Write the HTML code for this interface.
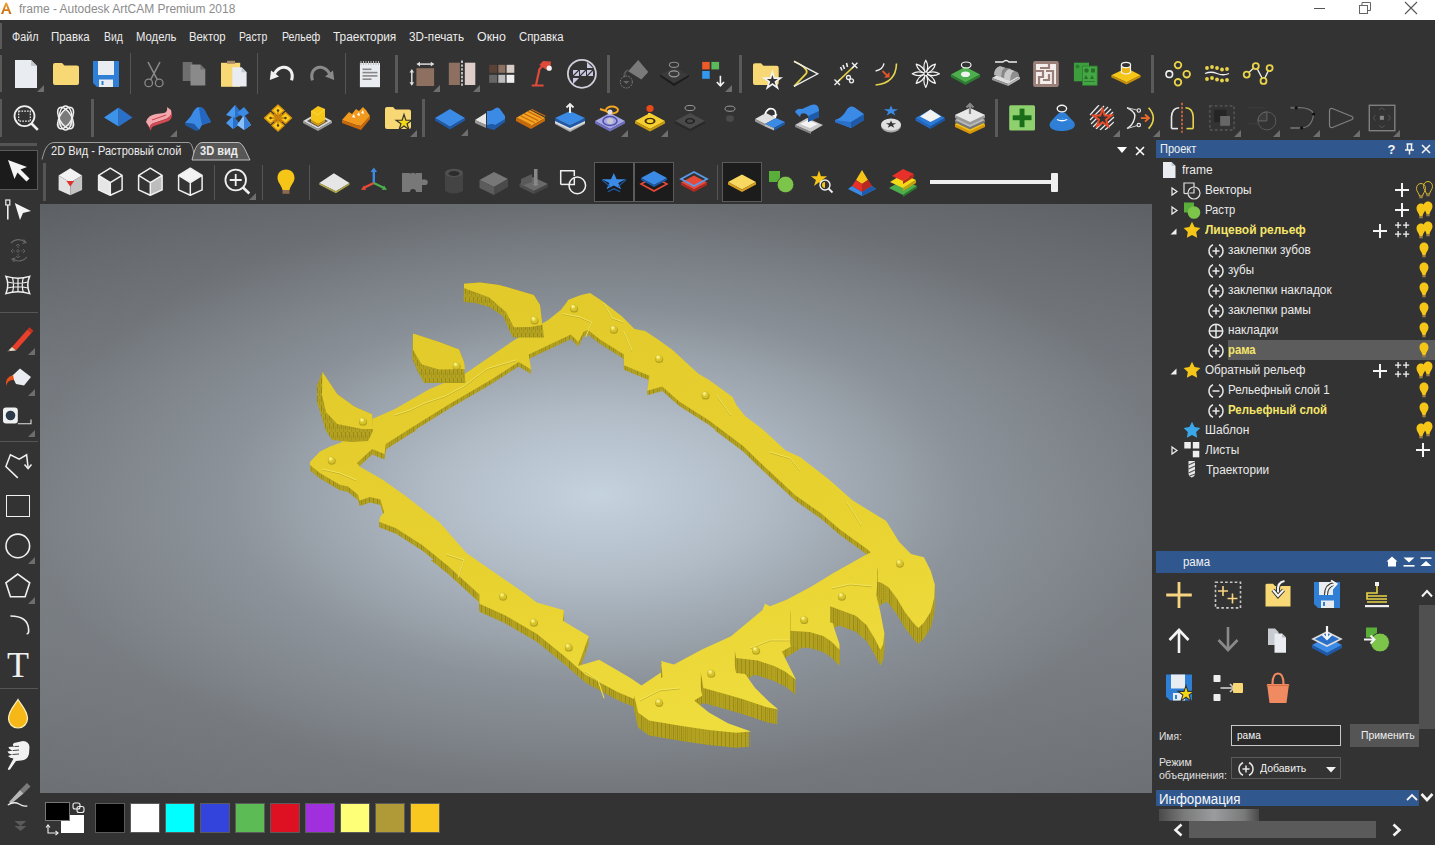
<!DOCTYPE html>
<html><head><meta charset="utf-8"><style>
html,body{margin:0;padding:0;width:1435px;height:845px;overflow:hidden;background:#333;}
body{position:relative;font-family:"Liberation Sans", sans-serif;}
svg{display:block}
</style></head><body>
<div style="position:absolute;left:0px;top:0px;width:1435px;height:20px;background:#ffffff"></div>
<svg style="position:absolute;left:0px;top:1px;overflow:visible" width="13" height="14" viewBox="0 0 13 14"><defs><linearGradient id="lg" x1="0" y1="0" x2="0" y2="1"><stop offset="0" stop-color="#f0a030"/><stop offset="1" stop-color="#c86a10"/></linearGradient></defs><path d="M1 13 L5.2 2.2 Q6.2 1 7.2 2.2 L11.5 13 H9.3 L8.2 10 H4.3 L3.2 13 Z M4.9 8.2 H7.6 L6.25 4.4 Z" fill="url(#lg)"/></svg>
<div style="position:absolute;left:19.2px;top:1.5px;font-size:12px;line-height:14px;color:#8c8c8c;font-weight:normal;white-space:nowrap;transform:scaleX(0.9981);transform-origin:0 0;">frame - Autodesk ArtCAM Premium 2018</div>
<div style="position:absolute;left:1314px;top:8px;width:11px;height:1px;background:#555"></div>
<svg style="position:absolute;left:1359px;top:2px;overflow:visible" width="12" height="12" viewBox="0 0 12 12"><rect x="0.5" y="3.5" width="8" height="8" fill="none" stroke="#666"/><path d="M3 3.5 V0.5 H11.5 V8.5 H8.5" fill="none" stroke="#666"/></svg>
<svg style="position:absolute;left:1404px;top:1px;overflow:visible" width="14" height="14" viewBox="0 0 14 14"><path d="M1 1 L13 13 M13 1 L1 13" stroke="#555" stroke-width="1.1"/></svg>
<div style="position:absolute;left:0px;top:20px;width:1435px;height:825px;background:#333333"></div>
<div style="position:absolute;left:11.5px;top:29.5px;font-size:12px;line-height:14px;color:#ececec;font-weight:normal;white-space:nowrap;transform:scaleX(0.8983);transform-origin:0 0;">Файл</div>
<div style="position:absolute;left:51.2px;top:29.5px;font-size:12px;line-height:14px;color:#ececec;font-weight:normal;white-space:nowrap;transform:scaleX(0.9548);transform-origin:0 0;">Правка</div>
<div style="position:absolute;left:103.5px;top:29.5px;font-size:12px;line-height:14px;color:#ececec;font-weight:normal;white-space:nowrap;transform:scaleX(0.8662);transform-origin:0 0;">Вид</div>
<div style="position:absolute;left:135.5px;top:29.5px;font-size:12px;line-height:14px;color:#ececec;font-weight:normal;white-space:nowrap;transform:scaleX(0.9402);transform-origin:0 0;">Модель</div>
<div style="position:absolute;left:189.2px;top:29.5px;font-size:12px;line-height:14px;color:#ececec;font-weight:normal;white-space:nowrap;transform:scaleX(0.9441);transform-origin:0 0;">Вектор</div>
<div style="position:absolute;left:239.4px;top:29.5px;font-size:12px;line-height:14px;color:#ececec;font-weight:normal;white-space:nowrap;transform:scaleX(0.8689);transform-origin:0 0;">Растр</div>
<div style="position:absolute;left:281.5px;top:29.5px;font-size:12px;line-height:14px;color:#ececec;font-weight:normal;white-space:nowrap;transform:scaleX(0.8795);transform-origin:0 0;">Рельеф</div>
<div style="position:absolute;left:332.7px;top:29.5px;font-size:12px;line-height:14px;color:#ececec;font-weight:normal;white-space:nowrap;transform:scaleX(0.9895);transform-origin:0 0;">Траектория</div>
<div style="position:absolute;left:409px;top:29.5px;font-size:12px;line-height:14px;color:#ececec;font-weight:normal;white-space:nowrap;transform:scaleX(0.9729);transform-origin:0 0;">3D-печать</div>
<div style="position:absolute;left:477px;top:29.5px;font-size:12px;line-height:14px;color:#ececec;font-weight:normal;white-space:nowrap;transform:scaleX(1.0332);transform-origin:0 0;">Окно</div>
<div style="position:absolute;left:519.2px;top:29.5px;font-size:12px;line-height:14px;color:#ececec;font-weight:normal;white-space:nowrap;transform:scaleX(0.9452);transform-origin:0 0;">Справка</div>
<div style="position:absolute;left:0px;top:23px;width:2px;height:26px;background:#5a5a5a"></div>
<div style="position:absolute;left:0px;top:55px;width:2px;height:37px;background:#5a5a5a"></div>
<div style="position:absolute;left:0px;top:99px;width:2px;height:38px;background:#5a5a5a"></div>
<div style="position:absolute;left:40px;top:204px;width:1112px;height:589px;background:radial-gradient(ellipse 820px 420px at 558px 291px, rgba(197,211,223,1) 0%, rgba(180,191,202,0.95) 20%, rgba(150,158,166,0.7) 45%, rgba(129,135,141,0.36) 70%, rgba(120,124,129,0) 100%), linear-gradient(to bottom, #5b5e62 0%, #6e7277 30%, #767a7f 55%, #74787d 75%, #6c6f73 100%)"></div>
<svg style="position:absolute;left:40px;top:140px;overflow:visible" width="215" height="22" viewBox="0 0 215 22"><path d="M2 19.5 C4 12 6 3 14 2.5 L148 2.5 C152 2.5 153 8 155 19.5" fill="none" stroke="#a8a8a8" stroke-width="0.9"/><path d="M152 20 C154 12 156 3 162 2.5 L198 2.5 C203 2.5 206 12 210 20 Z" fill="#575757" stroke="#c8c8c8" stroke-width="0.9"/></svg>
<div style="position:absolute;left:51px;top:144px;font-size:12px;line-height:14px;color:#ececec;font-weight:normal;white-space:nowrap;transform:scaleX(0.9200);transform-origin:0 0;">2D Вид - Растровый слой</div>
<div style="position:absolute;left:200px;top:144px;font-size:12px;line-height:14px;color:#ececec;font-weight:bold;white-space:nowrap;transform:scaleX(0.9200);transform-origin:0 0;">3D вид</div>
<div style="position:absolute;left:43px;top:163px;width:3px;height:38px;background:#555"></div>
<svg style="position:absolute;left:1117px;top:147px;overflow:visible" width="10" height="7" viewBox="0 0 10 7"><path d="M0 0 H10 L5 6 Z" fill="#fff"/></svg>
<svg style="position:absolute;left:1135px;top:146px;overflow:visible" width="10" height="10" viewBox="0 0 10 10"><path d="M1 1 L9 9 M9 1 L1 9" stroke="#fff" stroke-width="1.6"/></svg>
<div style="position:absolute;left:0px;top:143px;width:37px;height:3px;background:#555"></div>
<div style="position:absolute;left:0px;top:150px;width:38px;height:40px;background:#1b1b1b;border:1px solid #5a5a5a;box-sizing:border-box;border-left:none"></div>
<div style="position:absolute;left:1156px;top:140px;width:279px;height:18px;background:#30588f"></div>
<div style="position:absolute;left:1160px;top:142px;font-size:12px;line-height:14px;color:#f0f0f0;font-weight:normal;white-space:nowrap;transform:scaleX(0.9200);transform-origin:0 0;">Проект</div>
<svg style="position:absolute;left:10.0px;top:57.0px;overflow:visible" width="32" height="32" viewBox="0 0 32 32"><path d="M5 3 H21 L27 9 V31 H5 Z" fill="#e9ecf0"/><path d="M21 3 V9 H27 Z" fill="#c2c8d0"/></svg>
<svg style="position:absolute;left:37px;top:85px;overflow:visible" width="7" height="7" viewBox="0 0 7 7"><path d="M7 0 L7 7 L0 7 Z" fill="#6e6e6e"/></svg>
<svg style="position:absolute;left:50.0px;top:57.0px;overflow:visible" width="32" height="32" viewBox="0 0 32 32"><path d="M3 8 Q3 6 5 6 H12 L14.5 8.5 H27 Q29 8.5 29 10.5 V26 Q29 28 27 28 H5 Q3 28 3 26 Z" fill="#f8d775"/></svg>
<svg style="position:absolute;left:90.0px;top:57.0px;overflow:visible" width="32" height="32" viewBox="0 0 32 32"><path d="M3 4 H29 V30 H7 L3 26 Z" fill="#2f7fd6"/><rect x="8" y="4" width="16" height="14" fill="#e9ecf0"/><rect x="9" y="22.5" width="14" height="7.5" fill="#e9ecf0"/><rect x="11.5" y="24" width="2" height="4" fill="#2f7fd6"/></svg>
<div style="position:absolute;left:130px;top:53px;width:1px;height:41px;background:#555"></div>
<svg style="position:absolute;left:138.0px;top:57.0px;overflow:visible" width="32" height="32" viewBox="0 0 32 32"><path d="M10 5 L19.5 23 M22 5 L12.5 23" stroke="#8a8a8a" stroke-width="1.6"/><circle cx="10.7" cy="25.9" r="3.8" fill="none" stroke="#8a8a8a" stroke-width="1.3"/><circle cx="21.2" cy="25.9" r="3.8" fill="none" stroke="#8a8a8a" stroke-width="1.3"/></svg>
<svg style="position:absolute;left:178.0px;top:57.0px;overflow:visible" width="32" height="32" viewBox="0 0 32 32"><rect x="4.7" y="5" width="9.6" height="19" fill="#6e6e6e"/><path d="M12.5 7.6 H22.3 L27.3 12.6 V28.5 H12.5 Z" fill="#8a8a8a"/><path d="M22.3 7.6 V12.6 H27.3 Z" fill="#6e6e6e"/></svg>
<svg style="position:absolute;left:218.0px;top:57.0px;overflow:visible" width="32" height="32" viewBox="0 0 32 32"><rect x="3" y="5.8" width="19.2" height="24" fill="#f8d775"/><rect x="9" y="3.8" width="8" height="3" fill="#a88a6a"/><path d="M14.3 10.2 H23.6 L28.6 15.2 V29.4 H14.3 Z" fill="#e9ecf0"/><path d="M23.6 10.2 V15.2 H28.6 Z" fill="#c2c8d0"/></svg>
<div style="position:absolute;left:257px;top:53px;width:1px;height:41px;background:#555"></div>
<svg style="position:absolute;left:266.0px;top:57.0px;overflow:visible" width="32" height="32" viewBox="0 0 32 32"><path d="M25.6 23.3 C28 15 23 9.5 17 10.2 C13.5 10.6 10.5 13 8.5 16.5" fill="none" stroke="#f2f2f2" stroke-width="3"/><path d="M3.8 23 L5 13.5 L13 19.5 Z" fill="#f2f2f2"/></svg>
<svg style="position:absolute;left:306.0px;top:57.0px;overflow:visible" width="32" height="32" viewBox="0 0 32 32"><path d="M6.4 23.3 C4 15 9 9.5 15 10.2 C18.5 10.6 21.5 13 23.5 16.5" fill="none" stroke="#8a8a8a" stroke-width="3"/><path d="M28.2 23 L27 13.5 L19 19.5 Z" fill="#8a8a8a"/></svg>
<div style="position:absolute;left:345px;top:53px;width:1px;height:41px;background:#555"></div>
<svg style="position:absolute;left:354.0px;top:57.0px;overflow:visible" width="32" height="32" viewBox="0 0 32 32"><rect x="5.9" y="6" width="20.1" height="24.2" fill="#e9ecf0"/><path d="M7 4 V8 M9.5 4 V8 M12 4 V8 M14.5 4 V8 M17 4 V8 M19.5 4 V8 M22 4 V8 M24.5 4 V8" stroke="#bbb" stroke-width="1"/><rect x="8.5" y="11.5" width="9" height="1.6" fill="#888"/><rect x="8.5" y="14.8" width="15" height="1.6" fill="#888"/><rect x="8.5" y="18.1" width="15" height="1.6" fill="#888"/><rect x="8.5" y="21.4" width="9" height="1.6" fill="#888"/></svg>
<div style="position:absolute;left:395px;top:55px;width:3px;height:38px;background:#5a5a5a"></div>
<svg style="position:absolute;left:406.0px;top:57.0px;overflow:visible" width="32" height="32" viewBox="0 0 32 32"><rect x="10.4" y="11.2" width="17.7" height="17.8" fill="#8e7060"/><path d="M11.5 7.1 H27.3" stroke="#ddd" stroke-width="1.5"/><path d="M10.5 7.1 L14 4.8 V9.4 Z M28.3 7.1 L24.8 4.8 V9.4 Z" fill="#ddd"/><path d="M5.8 13 V27.7" stroke="#ddd" stroke-width="1.5"/><path d="M5.8 12 L3.5 15.5 H8.1 Z M5.8 28.7 L3.5 25.2 H8.1 Z" fill="#ddd"/></svg>
<svg style="position:absolute;left:433px;top:85px;overflow:visible" width="7" height="7" viewBox="0 0 7 7"><path d="M7 0 L7 7 L0 7 Z" fill="#6e6e6e"/></svg>
<svg style="position:absolute;left:446.0px;top:57.0px;overflow:visible" width="32" height="32" viewBox="0 0 32 32"><rect x="2.8" y="5.7" width="11.1" height="22.3" fill="#8e7060"/><path d="M16 3.6 V30" stroke="#e0e0e0" stroke-width="1.6" stroke-dasharray="2.4 1.4"/><rect x="18.8" y="5.7" width="10.5" height="22.3" fill="#dccdc9"/></svg>
<svg style="position:absolute;left:473px;top:85px;overflow:visible" width="7" height="7" viewBox="0 0 7 7"><path d="M7 0 L7 7 L0 7 Z" fill="#6e6e6e"/></svg>
<svg style="position:absolute;left:485.0px;top:57.0px;overflow:visible" width="32" height="32" viewBox="0 0 32 32"><rect x="4.2" y="7.8" width="7.9" height="8" fill="#5a4238"/><rect x="13.3" y="7.8" width="7" height="8" fill="#8e7060"/><rect x="21.6" y="7.8" width="7.7" height="8" fill="#d8ccc8"/><rect x="4.2" y="17.8" width="7.9" height="8" fill="#666"/><rect x="13.3" y="17.8" width="7" height="8" fill="#bdbdbd"/><rect x="21.6" y="17.8" width="7.7" height="8" fill="#f0f0f0"/></svg>
<svg style="position:absolute;left:526.0px;top:57.0px;overflow:visible" width="32" height="32" viewBox="0 0 32 32"><path d="M5.7 28.5 H17.6" stroke="#e04a3a" stroke-width="2"/><path d="M10 28 L13.5 12 L18 7.5" fill="none" stroke="#e04a3a" stroke-width="2.2"/><path d="M13.4 8 L17 4 L25 4.5 L24.2 12 L20 12.5 Z" fill="#e04a3a"/><circle cx="23.2" cy="11.2" r="2.6" fill="#f4f4f4"/></svg>
<svg style="position:absolute;left:566.0px;top:57.0px;overflow:visible" width="32" height="32" viewBox="0 0 32 32"><circle cx="15.9" cy="16.8" r="14" fill="none" stroke="#d0d0dc" stroke-width="1.8"/><path d="M7 13 H13 V19 H7 Z M14 13 H20 V19 H14 Z M21 13 H27 V19 H21 Z" fill="#c8c8e2"/><path d="M7 19 L13 13 M14 19 L20 13 M21 19 L27 13" stroke="#333" stroke-width="1.2"/><path d="M21 5 L27 11 H21 Z M7 21 H13 L7 27 Z" fill="#c8c8e2"/></svg>
<div style="position:absolute;left:607px;top:55px;width:3px;height:38px;background:#5a5a5a"></div>
<svg style="position:absolute;left:618.0px;top:57.0px;overflow:visible" width="32" height="32" viewBox="0 0 32 32"><path d="M10.2 14.3 L20.2 3 L30.3 14.9 L23.4 22.5 Z" fill="#7a7a7a"/><path d="M10 13 Q5 16 7 20" fill="none" stroke="#555" stroke-width="2"/><circle cx="8.3" cy="25" r="6" fill="none" stroke="#888" stroke-width="1" stroke-dasharray="1.5 1.2"/><path d="M5 24 H11.6 L8.3 27 Z" fill="#666"/></svg>
<svg style="position:absolute;left:658.0px;top:57.0px;overflow:visible" width="32" height="32" viewBox="0 0 32 32"><path d="M2.2 17.4 L16 9.9 L31 18 L16 26.5 Z" fill="#3a3a3a"/><path d="M2.2 17.4 L16 26.5 L31 18 L31 19.8 L16 28.9 L2.2 19.4 Z" fill="#1c1c1c"/><ellipse cx="16" cy="16.8" rx="5" ry="3" fill="none" stroke="#9a9a9a" stroke-width="1.2"/><ellipse cx="16" cy="7.8" rx="4.6" ry="2.6" fill="none" stroke="#8a8a8a" stroke-width="1.1"/></svg>
<svg style="position:absolute;left:698.0px;top:57.0px;overflow:visible" width="32" height="32" viewBox="0 0 32 32"><rect x="4.2" y="4.9" width="7.5" height="7.5" fill="#f05a28"/><rect x="13.4" y="4.9" width="7.7" height="7.5" fill="#5cb85c"/><rect x="4.2" y="14" width="7.5" height="7.8" fill="#3399ee"/><path d="M22.4 18.7 V28.5 M18.8 25 L22.4 28.8 L26 25" fill="none" stroke="#f4f4f4" stroke-width="1.6"/></svg>
<svg style="position:absolute;left:725px;top:85px;overflow:visible" width="7" height="7" viewBox="0 0 7 7"><path d="M7 0 L7 7 L0 7 Z" fill="#6e6e6e"/></svg>
<div style="position:absolute;left:739px;top:55px;width:3px;height:38px;background:#5a5a5a"></div>
<svg style="position:absolute;left:750.0px;top:57.0px;overflow:visible" width="32" height="32" viewBox="0 0 32 32"><path d="M3 8 Q3 6.2 5 6.2 H11 L13.5 8.7 H26.7 Q28.7 8.7 28.7 10.7 V26 Q28.7 28.1 26.7 28.1 H5 Q3 28.1 3 26 Z" fill="#f8d775"/><path transform="translate(22.4 23.8) scale(8.5)" d="M0 -1 L0.2245 -0.309 L0.951 -0.309 L0.363 0.118 L0.588 0.809 L0 0.382 L-0.588 0.809 L-0.363 0.118 L-0.951 -0.309 L-0.2245 -0.309 Z" fill="#333" stroke="#f2f2f2" stroke-width="0.2"/></svg>
<svg style="position:absolute;left:789.0px;top:57.0px;overflow:visible" width="32" height="32" viewBox="0 0 32 32"><path d="M5 4.3 Q21 12 16.9 16.8 Q12 22 5 29.4" fill="none" stroke="#e8d44a" stroke-width="1.8"/><path d="M5 4.3 L28.8 16.8 L5 29.4" fill="none" stroke="#eee" stroke-width="1.3"/></svg>
<svg style="position:absolute;left:829.0px;top:57.0px;overflow:visible" width="32" height="32" viewBox="0 0 32 32"><path d="M8.3 25.2 L25.7 8.5" stroke="#e8d44a" stroke-width="1.6"/><path d="M5.5 22.5 L11 28 M11 22.5 L5.5 28 M23 5.8 L28.4 11.2 M28.4 5.8 L23 11.2" stroke="#f0f0f0" stroke-width="1.4"/><path d="M14 8 L15.5 12 M17.5 6 L18.5 10 M11.5 10 L13 13.5" stroke="#f0f0f0" stroke-width="1.6"/><circle cx="19.5" cy="20.5" r="2" fill="none" stroke="#f0f0f0" stroke-width="1.3"/><circle cx="22.5" cy="23.8" r="2" fill="none" stroke="#f0f0f0" stroke-width="1.3"/></svg>
<svg style="position:absolute;left:869.0px;top:57.0px;overflow:visible" width="32" height="32" viewBox="0 0 32 32"><path d="M27.5 6.4 Q27 26 6.6 28" fill="none" stroke="#e8d44a" stroke-width="1.6"/><path d="M15 6.4 Q14 12.5 6.6 14" fill="none" stroke="#eee" stroke-width="1.4"/><path d="M13.6 14 L19.3 19.8" stroke="#e8542a" stroke-width="1.8"/><path d="M15 20.5 H20.5 V15 Z" fill="#e8542a"/></svg>
<svg style="position:absolute;left:910.0px;top:57.0px;overflow:visible" width="32" height="32" viewBox="0 0 32 32"><path d="M15.8 16.8 Q19.6 9.5 15.8 3.2 Q12 9.5 15.8 16.8 Z" transform="rotate(0 15.8 16.8)" fill="none" stroke="#f4f4f4" stroke-width="1.2" stroke-linejoin="round"/><path d="M15.8 16.8 Q19.6 9.5 15.8 3.2 Q12 9.5 15.8 16.8 Z" transform="rotate(45 15.8 16.8)" fill="none" stroke="#f4f4f4" stroke-width="1.2" stroke-linejoin="round"/><path d="M15.8 16.8 Q19.6 9.5 15.8 3.2 Q12 9.5 15.8 16.8 Z" transform="rotate(90 15.8 16.8)" fill="none" stroke="#f4f4f4" stroke-width="1.2" stroke-linejoin="round"/><path d="M15.8 16.8 Q19.6 9.5 15.8 3.2 Q12 9.5 15.8 16.8 Z" transform="rotate(135 15.8 16.8)" fill="none" stroke="#f4f4f4" stroke-width="1.2" stroke-linejoin="round"/><path d="M15.8 16.8 Q19.6 9.5 15.8 3.2 Q12 9.5 15.8 16.8 Z" transform="rotate(180 15.8 16.8)" fill="none" stroke="#f4f4f4" stroke-width="1.2" stroke-linejoin="round"/><path d="M15.8 16.8 Q19.6 9.5 15.8 3.2 Q12 9.5 15.8 16.8 Z" transform="rotate(225 15.8 16.8)" fill="none" stroke="#f4f4f4" stroke-width="1.2" stroke-linejoin="round"/><path d="M15.8 16.8 Q19.6 9.5 15.8 3.2 Q12 9.5 15.8 16.8 Z" transform="rotate(270 15.8 16.8)" fill="none" stroke="#f4f4f4" stroke-width="1.2" stroke-linejoin="round"/><path d="M15.8 16.8 Q19.6 9.5 15.8 3.2 Q12 9.5 15.8 16.8 Z" transform="rotate(315 15.8 16.8)" fill="none" stroke="#f4f4f4" stroke-width="1.2" stroke-linejoin="round"/><circle cx="15.8" cy="16.8" r="1.3" fill="#222"/></svg>
<svg style="position:absolute;left:950.0px;top:57.0px;overflow:visible" width="32" height="32" viewBox="0 0 32 32"><path d="M0.9 17.5 L15.5 9.8 L30.1 17.5 L15.5 25.5 Z" fill="#4cae4c"/><path d="M0.9 17.5 L15.5 25.5 L30.1 17.5 V20 L15.5 28 L0.9 20 Z" fill="#2e7d32"/><ellipse cx="15.5" cy="17.3" rx="4.5" ry="2.8" fill="#eef3ee"/><ellipse cx="16.2" cy="8" rx="4.8" ry="3" fill="none" stroke="#f2f2f2" stroke-width="1.2"/></svg>
<svg style="position:absolute;left:990.0px;top:57.0px;overflow:visible" width="32" height="32" viewBox="0 0 32 32"><path d="M5 5 H13 Q16 2 19 5 H27" fill="none" stroke="#eee" stroke-width="1.3"/><path d="M2 21 L14 14 L30 20 L18 27 Z" fill="#ddd"/><path d="M2 21 L18 27 V29 L2 23 Z" fill="#999"/><path d="M18 27 L30 20 V22 L18 29 Z" fill="#bbb"/><path d="M4 18 Q4 11 10 9 L16 11 Q11 13 11 20 Z" fill="#b5b5b5"/><path d="M11 20 Q11 13 16 11 Q22 11 22 14 L18 23 Z" fill="#888"/><path d="M14 22 Q14 14 19 12 L25 14 Q20 16 20 24 Z" fill="#c8c8c8"/><path d="M20 24 Q20 16 25 14 Q29 15 29 19 Z" fill="#8f8f8f"/></svg>
<svg style="position:absolute;left:1030.0px;top:57.0px;overflow:visible" width="32" height="32" viewBox="0 0 32 32"><rect x="3.1" y="4" width="25.7" height="26" rx="2" fill="#9a8078"/><rect x="6" y="7" width="20" height="20" fill="#f4eeec"/><path d="M6 14 H13 V20 H9 V27 M19 7 V11 H10 M16 14 H23 V27 M13 23 H19 V17" fill="none" stroke="#9a8078" stroke-width="2.2"/></svg>
<svg style="position:absolute;left:1069.0px;top:57.0px;overflow:visible" width="32" height="32" viewBox="0 0 32 32"><rect x="4.9" y="5.7" width="15.1" height="18.6" fill="#3d9e3d"/><rect x="13.6" y="9.1" width="14.6" height="19.2" fill="#43a843" stroke="#2f7d2f" stroke-width="0.8"/><circle cx="8.5" cy="9.5" r="2" fill="#2e7a2e"/><circle cx="17.5" cy="13.5" r="2.2" fill="#2a6e2a"/><rect x="22" y="11.5" width="4" height="4" fill="#2a6e2a"/><path d="M15 22 L17 18 L19 22 Z M21 22 L23 18 L25 22 Z" fill="#2a6e2a"/><path d="M15 24.5 H26" stroke="#2a6e2a" stroke-width="0.8"/></svg>
<svg style="position:absolute;left:1110.0px;top:57.0px;overflow:visible" width="32" height="32" viewBox="0 0 32 32"><path d="M1.3 18.2 L16.5 11.1 L30.6 18.2 L16.5 25.3 Z" fill="#f5c518"/><path d="M1.3 18.2 L16.5 25.3 L30.6 18.2 V20.3 L16.5 27.5 L1.3 20.3 Z" fill="#c9920c"/><path d="M11.4 8 V15.5 Q16 18.5 20.5 15.5 V8" fill="#e9b616" stroke="#f4f4f4" stroke-width="1.1"/><ellipse cx="16" cy="8" rx="4.6" ry="2.6" fill="#333" stroke="#f4f4f4" stroke-width="1.2"/></svg>
<div style="position:absolute;left:1151px;top:55px;width:3px;height:38px;background:#5a5a5a"></div>
<svg style="position:absolute;left:1162.0px;top:57.0px;overflow:visible" width="32" height="32" viewBox="0 0 32 32"><circle cx="7.3" cy="17.2" r="3.3" fill="none" stroke="#f0f0f0" stroke-width="1.6"/><circle cx="16" cy="8.1" r="3.3" fill="none" stroke="#e8d44a" stroke-width="1.8"/><circle cx="24.7" cy="17.2" r="3.3" fill="none" stroke="#e8d44a" stroke-width="1.8"/><circle cx="16" cy="25.3" r="3.3" fill="none" stroke="#e8d44a" stroke-width="1.8"/></svg>
<svg style="position:absolute;left:1202.0px;top:57.0px;overflow:visible" width="32" height="32" viewBox="0 0 32 32"><circle cx="5" cy="11" r="1.9" fill="#e8d44a"/><circle cx="10" cy="10" r="1.9" fill="#e8d44a"/><circle cx="15" cy="11" r="1.9" fill="#e8d44a"/><circle cx="20" cy="12.5" r="1.9" fill="#e8d44a"/><circle cx="25" cy="12" r="1.9" fill="#e8d44a"/><circle cx="5" cy="22" r="1.9" fill="#e8d44a"/><circle cx="10" cy="21" r="1.9" fill="#e8d44a"/><circle cx="15" cy="22.5" r="1.9" fill="#e8d44a"/><circle cx="20" cy="23.5" r="1.9" fill="#e8d44a"/><circle cx="25" cy="23" r="1.9" fill="#e8d44a"/><path d="M3 16.5 Q9 14 15 16.5 T27 16.5" fill="none" stroke="#f0f0f0" stroke-width="1.3"/></svg>
<svg style="position:absolute;left:1242.0px;top:57.0px;overflow:visible" width="32" height="32" viewBox="0 0 32 32"><path d="M4.7 17.6 L13.8 9.1 L21.5 23.9 L27.6 11.1" fill="none" stroke="#f0f0f0" stroke-width="1.3"/><circle cx="4.7" cy="17.6" r="3" fill="#333" stroke="#e8d44a" stroke-width="1.8"/><circle cx="13.8" cy="9.1" r="3" fill="#333" stroke="#e8d44a" stroke-width="1.8"/><circle cx="21.5" cy="23.9" r="3" fill="#333" stroke="#e8d44a" stroke-width="1.8"/><circle cx="27.6" cy="11.1" r="3" fill="#333" stroke="#e8d44a" stroke-width="1.8"/></svg>
<svg style="position:absolute;left:9.0px;top:101.0px;overflow:visible" width="32" height="32" viewBox="0 0 32 32"><circle cx="15.5" cy="15.1" r="10" fill="none" stroke="#f0f0f0" stroke-width="1.8"/><rect x="9.7" y="10.2" width="11.6" height="10" fill="none" stroke="#f0f0f0" stroke-width="1.2" stroke-dasharray="1.6 1.2"/><path d="M22.5 22.5 L28.8 28.8" stroke="#f0f0f0" stroke-width="2.6"/></svg>
<svg style="position:absolute;left:50.0px;top:101.0px;overflow:visible" width="32" height="32" viewBox="0 0 32 32"><path d="M15.6 9 L23 24 H8 Z" fill="#7a7a7a" stroke="#7a7a7a" stroke-width="3" stroke-linejoin="round"/><ellipse cx="15.6" cy="17" rx="6.5" ry="12" fill="none" stroke="#f0f0f0" stroke-width="1.5"/><ellipse cx="15.6" cy="17" rx="12" ry="6" transform="rotate(60 15.6 17)" fill="none" stroke="#f0f0f0" stroke-width="1.5"/><ellipse cx="15.6" cy="17" rx="12" ry="6" transform="rotate(-60 15.6 17)" fill="none" stroke="#f0f0f0" stroke-width="1.5"/></svg>
<div style="position:absolute;left:91px;top:99px;width:3px;height:38px;background:#5a5a5a"></div>
<svg style="position:absolute;left:102.0px;top:101.0px;overflow:visible" width="32" height="32" viewBox="0 0 32 32"><path d="M2 16.5 L16.6 6.5 L16.6 25.6 Z" fill="#3d92ea"/><path d="M16.6 6.5 L30.5 16.5 L16.6 25.6 Z" fill="#2a6fc8"/></svg>
<svg style="position:absolute;left:142.0px;top:101.0px;overflow:visible" width="32" height="32" viewBox="0 0 32 32"><path d="M4 21 Q6 14 14 13 L22 12 Q26 11 25 6 L29 9 Q31 15 24 18 L12 22 Q8 23 8 27 Z" fill="#f3a7ad"/><path d="M4 21 L8 27 Q8 23 12 22 L24 18 Q31 15 29 9 L30 12 Q31 19 24 21 L12 25 Q9 26 9 30 Z" fill="#d24a52"/><path d="M10 19 L24 14" stroke="#c84048" stroke-width="1"/></svg>
<svg style="position:absolute;left:169.5px;top:129.5px;overflow:visible" width="7" height="7" viewBox="0 0 7 7"><path d="M7 0 L7 7 L0 7 Z" fill="#6e6e6e"/></svg>
<svg style="position:absolute;left:182.0px;top:101.0px;overflow:visible" width="32" height="32" viewBox="0 0 32 32"><path d="M3 22 L9 15 Q13 6 17 6 Q22 6 24 12 L29 21 L20 24 L17 29 L12 23 Z" fill="#3a8ae6"/><path d="M17 6 Q22 6 24 12 L29 21 L20 24 L18 14 Z" fill="#2466c0"/><path d="M3 22 L12 23 L17 29 L14 30 L3 24 Z" fill="#1f5aa8"/></svg>
<svg style="position:absolute;left:222.0px;top:101.0px;overflow:visible" width="32" height="32" viewBox="0 0 32 32"><path d="M4 14 L13 4 L20 13 L13 17 Z" fill="#4a9af0"/><path d="M13 4 L20 13 L13 17 Z" fill="#2a70c8"/><path d="M4 22 L11 15 L18 23 L11 28 Z" fill="#4a9af0"/><path d="M11 15 L18 23 L11 28 Z" fill="#2a70c8"/><path d="M15 24 L22 14 L29 24 L22 29 Z" fill="#8ac0f8"/><path d="M22 14 L29 24 L22 29 Z" fill="#3a80d8"/><path d="M15 12 L22 6 L27 12 L21 16 Z" fill="#3a8ae6"/></svg>
<svg style="position:absolute;left:262.0px;top:101.0px;overflow:visible" width="32" height="32" viewBox="0 0 32 32"><g stroke-linejoin="round"><path d="M16 4.0 L22 9.5 L16 15.0 L10 9.5 Z M23.5 11.5 L29.5 17 L23.5 22.5 L17.5 17 Z M16 19.0 L22 24.5 L16 30.0 L10 24.5 Z M8.5 11.5 L14.5 17 L8.5 22.5 L2.5 17 Z" fill="#f8cc20" stroke="#d8900c" stroke-width="1.4"/><path d="M16 9.5 L16 24.5 M8.5 17 L23.5 17 M12 13 L20 21 M20 13 L12 21" stroke="#c8800a" stroke-width="1.3"/></g><g fill="#5a3a00"><circle cx="16" cy="9.5" r="1.2"/><circle cx="23.5" cy="17" r="1.2"/><circle cx="16" cy="24.5" r="1.2"/><circle cx="8.5" cy="17" r="1.2"/></g></svg>
<svg style="position:absolute;left:301.0px;top:101.0px;overflow:visible" width="32" height="32" viewBox="0 0 32 32"><path d="M2 20 L16 12 L31 20 L17 28 Z" fill="#d8d8d8"/><path d="M2 20 L17 28 L31 20 V22 L17 30 L2 22 Z" fill="#9a9a9a"/><path d="M6 20 L16 14 L27 20 L17 26 Z" fill="#555"/><path d="M10 10 L17 5 L24 8 L24 19 L17 23 L10 19 Z" fill="#f5c518"/><path d="M10 19 L17 23 L24 19 V21 L17 25 L10 21 Z" fill="#d8980c"/><path d="M10 10 L17 14 L24 8" fill="none" stroke="#ffe066" stroke-width="0.6"/></svg>
<svg style="position:absolute;left:340.0px;top:101.0px;overflow:visible" width="32" height="32" viewBox="0 0 32 32"><path d="M2 19 L9 11 L12 13 L16 8 L19 10 L23 6 L26 9 L30 15 L21 25 L16 24 Z" fill="#f29a1e"/><path d="M2 19 L16 24 L21 25 L30 15 V18 L21 29 L2 22 Z" fill="#c86a0c"/><path d="M12 16 L14 13 L15 17 Z M17 14 L19 11 L20 15 Z M21 12 L23 9 L24 13 Z" fill="#fff"/></svg>
<svg style="position:absolute;left:383.0px;top:101.0px;overflow:visible" width="32" height="32" viewBox="0 0 32 32"><path d="M2 8 Q2 6 4 6 H10 L12.5 8.5 H26 Q28 8.5 28 10.5 V26 Q28 28 26 28 H4 Q2 28 2 26 Z" fill="#f8d775"/><path transform="translate(21 21.8) scale(8.3)" d="M0 -1 L0.2245 -0.309 L0.951 -0.309 L0.363 0.118 L0.588 0.809 L0 0.382 L-0.588 0.809 L-0.363 0.118 L-0.951 -0.309 L-0.2245 -0.309 Z" fill="#f5d815" stroke="#333" stroke-width="0.14"/></svg>
<svg style="position:absolute;left:409.5px;top:129.5px;overflow:visible" width="7" height="7" viewBox="0 0 7 7"><path d="M7 0 L7 7 L0 7 Z" fill="#6e6e6e"/></svg>
<div style="position:absolute;left:422px;top:99px;width:3px;height:38px;background:#5a5a5a"></div>
<svg style="position:absolute;left:433.5px;top:101.0px;overflow:visible" width="32" height="32" viewBox="0 0 32 32"><path d="M1 16.9 L16 7.9 L31 16.9 L16 25.8 Z" fill="#3a8ae6"/><path d="M1 16.9 L16 25.8 L31 16.9 V19.5 L16 28.4 L1 19.5 Z" fill="#1f5aa8"/></svg>
<svg style="position:absolute;left:460.5px;top:129px;overflow:visible" width="7" height="7" viewBox="0 0 7 7"><path d="M7 0 L7 7 L0 7 Z" fill="#6e6e6e"/></svg>
<svg style="position:absolute;left:473.7px;top:101.0px;overflow:visible" width="32" height="32" viewBox="0 0 32 32"><path d="M1 19 L12 12 V24 Z" fill="#e8e8e8"/><path d="M1 19 L12 24 V27 L1 22 Z" fill="#999"/><path d="M13 10 Q18 10 20 8 Q24 5 26 8 L31 15 L31 20 L20 27 L13 25 Z" fill="#3a8ae6"/><path d="M13 24 Q19 22 21 24 L31 18 V21 L20 29 L13 27 Z" fill="#1f5aa8"/></svg>
<svg style="position:absolute;left:514.0px;top:101.0px;overflow:visible" width="32" height="32" viewBox="0 0 32 32"><path d="M2 17 L16 9 L31 17 L17 25 Z" fill="#f5a623"/><path d="M2 17 L17 25 L31 17 V20 L17 28 L2 20 Z" fill="#c86a0c"/><path d="M3.0 17.0 L17.0 24.0" stroke="#c86a0c" stroke-width="1.2"/><path d="M6.6 14.8 L20.6 21.8" stroke="#c86a0c" stroke-width="1.2"/><path d="M10.2 12.6 L24.2 19.6" stroke="#c86a0c" stroke-width="1.2"/><path d="M13.8 10.399999999999999 L27.8 17.4" stroke="#c86a0c" stroke-width="1.2"/><path d="M17.4 8.2 L31.4 15.2" stroke="#c86a0c" stroke-width="1.2"/></svg>
<svg style="position:absolute;left:554.0px;top:101.0px;overflow:visible" width="32" height="32" viewBox="0 0 32 32"><path d="M1 20 L16 13 L31 20 V23 L16 31 L1 23 Z" fill="#aaa"/><path d="M1 20 L16 27 L31 20 V22 L16 29 L1 22 Z" fill="#ddd"/><path d="M1 17 L16 10 L31 17 L16 24 Z" fill="#3a8ae6"/><path d="M1 17 L16 24 L31 17 V20 L16 27 L1 20 Z" fill="#1f5aa8"/><path d="M16 3 V12" stroke="#eee" stroke-width="2"/><path d="M12.5 6.5 L16 3 L19.5 6.5" fill="none" stroke="#eee" stroke-width="1.8"/></svg>
<svg style="position:absolute;left:593.6px;top:101.0px;overflow:visible" width="32" height="32" viewBox="0 0 32 32"><path d="M1 20 L16 12 L31 20 L16 28 Z" fill="#a8a8e8"/><path d="M1 20 L16 28 L31 20 V22.5 L16 30.5 L1 22.5 Z" fill="#7070c0"/><ellipse cx="16" cy="20" rx="7" ry="4.5" fill="none" stroke="#5050a8" stroke-width="1.6"/><circle cx="16" cy="20" r="3" fill="#c8c8d0"/><ellipse cx="18" cy="9" rx="6" ry="3.5" fill="none" stroke="#f5a623" stroke-width="2"/><path d="M6 8 L12 10" stroke="#f5a623" stroke-width="2"/><circle cx="16" cy="11" r="2.5" fill="#ddd"/></svg>
<svg style="position:absolute;left:620.6px;top:129.5px;overflow:visible" width="7" height="7" viewBox="0 0 7 7"><path d="M7 0 L7 7 L0 7 Z" fill="#6e6e6e"/></svg>
<svg style="position:absolute;left:633.6px;top:101.0px;overflow:visible" width="32" height="32" viewBox="0 0 32 32"><path d="M1 20 L16 12 L31 20 L16 28 Z" fill="#f5d030"/><path d="M1 20 L16 28 L31 20 V22.5 L16 30.5 L1 22.5 Z" fill="#c89a10"/><ellipse cx="16" cy="20" rx="5.5" ry="3.2" fill="#3a2a00"/><ellipse cx="16" cy="20" rx="3.5" ry="2" fill="#f5d030"/><path d="M15 12 V17" stroke="#f5d030" stroke-width="2"/><circle cx="16" cy="7.5" r="3.6" fill="#e84a1a"/></svg>
<svg style="position:absolute;left:660.6px;top:129.5px;overflow:visible" width="7" height="7" viewBox="0 0 7 7"><path d="M7 0 L7 7 L0 7 Z" fill="#6e6e6e"/></svg>
<svg style="position:absolute;left:674.0px;top:101.0px;overflow:visible" width="32" height="32" viewBox="0 0 32 32"><path d="M1 20 L16 12 L31 20 L16 28 Z" fill="#4a4a4a"/><path d="M1 20 L16 28 L31 20 V22.5 L16 30.5 L1 22.5 Z" fill="#2a2a2a"/><ellipse cx="16" cy="20" rx="5" ry="3" fill="#222"/><ellipse cx="16" cy="20" rx="3" ry="1.7" fill="#4a4a4a"/><ellipse cx="16" cy="7" rx="5" ry="2.6" fill="none" stroke="#999" stroke-width="1"/></svg>
<svg style="position:absolute;left:713.6px;top:101.0px;overflow:visible" width="32" height="32" viewBox="0 0 32 32"><ellipse cx="16" cy="7.7" rx="5" ry="2.6" fill="none" stroke="#9a9a9a" stroke-width="1"/><ellipse cx="16" cy="17.6" rx="4" ry="3.3" fill="#4a4a4a"/></svg>
<svg style="position:absolute;left:753.7px;top:101.0px;overflow:visible" width="32" height="32" viewBox="0 0 32 32"><path d="M1 18 L12 12 L22 17 L11 23 Z" fill="#e0e0e0"/><path d="M11 23 L22 17 L31 21 L20 27 Z" fill="#3a8ae6"/><path d="M1 18 L11 23 V25.5 L1 20.5 Z" fill="#999"/><path d="M11 23 L20 27 V29.5 L11 25.5 Z" fill="#bbb"/><path d="M20 27 L31 21 V23.5 L20 29.5 Z" fill="#1f5aa8"/><path d="M11 13 Q14 6 19 8 Q23 10 21 16" fill="none" stroke="#fff" stroke-width="1.6"/><path d="M18 14.5 L21.5 17.5 L23.5 13 Z" fill="#fff"/></svg>
<svg style="position:absolute;left:794.0px;top:101.0px;overflow:visible" width="32" height="32" viewBox="0 0 32 32"><path d="M1 24 L13 17 L29 24 L17 31 Z" fill="#c8c8c8"/><path d="M6 23 L14 19 L24 23 L16 27 Z" fill="#f4f4f4"/><path d="M1 24 L17 31 V33 L1 26 Z" fill="#888"/><path d="M1 11 Q3 7 8 8 L17 4 Q24 2 25 9 L25 16 L14 21 L14 15 Q12 11 7 13 L6 16 Z" fill="#3a8ae6"/><path d="M14 15 L25 10 V16 L14 21 Z" fill="#1f5aa8"/></svg>
<svg style="position:absolute;left:834.0px;top:101.0px;overflow:visible" width="32" height="32" viewBox="0 0 32 32"><path d="M1 19 Q8 17 12 10 Q15 4 20 6 L30 13 L30 19 L17 27 L1 21 Z" fill="#3a8ae6"/><path d="M17 21 L30 13 V19 L17 27 Z" fill="#1f5aa8"/><path d="M1 19 L17 21 V27 L1 21 Z" fill="#2a70c8"/></svg>
<svg style="position:absolute;left:874.6px;top:101.0px;overflow:visible" width="32" height="32" viewBox="0 0 32 32"><ellipse cx="16" cy="25" rx="10" ry="6.5" fill="#aaa"/><ellipse cx="16" cy="23.5" rx="10" ry="6" fill="#e0e0e0"/><path transform="translate(16 23.5) scale(5.5 4)" d="M0 -1 L0.2245 -0.309 L0.951 -0.309 L0.363 0.118 L0.588 0.809 L0 0.382 L-0.588 0.809 L-0.363 0.118 L-0.951 -0.309 L-0.2245 -0.309 Z" fill="#333"/><path transform="translate(16 10) scale(7.5 5.5)" d="M0 -1 L0.2245 -0.309 L0.951 -0.309 L0.363 0.118 L0.588 0.809 L0 0.382 L-0.588 0.809 L-0.363 0.118 L-0.951 -0.309 L-0.2245 -0.309 Z" fill="#3a8ae6"/></svg>
<svg style="position:absolute;left:913.6px;top:101.0px;overflow:visible" width="32" height="32" viewBox="0 0 32 32"><path d="M1.5 17 L16.5 8.5 L31 17 L16.5 25.5 Z" fill="#2a78d8"/><path d="M16.5 25.5 L31 17 V19.5 L16.5 28 Z" fill="#1a55a0"/><path d="M1.5 17 L16.5 25.5 V28 L1.5 19.5 Z" fill="#2466c0"/><path d="M6 15.5 L16.5 8.5 L27 15.5 L16.5 21 Z" fill="#f2f2f2"/></svg>
<svg style="position:absolute;left:953.7px;top:101.0px;overflow:visible" width="32" height="32" viewBox="0 0 32 32"><path d="M1 23 L16 16 L31 23 V26 L16 33 L1 26 Z" fill="#d8980c"/><path d="M1 23 L16 16 L31 23 L16 30 Z" fill="#f5c518"/><path d="M1 19 L16 12 L31 19 V21.5 L16 28.5 L1 21.5 Z" fill="#777"/><path d="M1 19 L16 12 L31 19 L16 26 Z" fill="#bbb"/><path d="M1 14 L16 7 L31 14 V17 L16 24 L1 17 Z" fill="#999"/><path d="M1 14 L16 7 L31 14 L16 21 Z" fill="#e8e8e8"/><path d="M16 3 V13" stroke="#888" stroke-width="2.2"/><path d="M12.5 6.5 L16 3 L19.5 6.5" fill="none" stroke="#888" stroke-width="2"/></svg>
<div style="position:absolute;left:995px;top:99px;width:3px;height:38px;background:#5a5a5a"></div>
<svg style="position:absolute;left:1006.0px;top:101.0px;overflow:visible" width="32" height="32" viewBox="0 0 32 32"><rect x="3.2" y="4.3" width="25.8" height="25.1" rx="1.5" fill="#8fd06e"/><rect x="6.7" y="14.3" width="18.8" height="4.9" fill="#1a6e1a"/><rect x="13.6" y="7.6" width="4.9" height="18.6" fill="#1a6e1a"/></svg>
<svg style="position:absolute;left:1045.5px;top:101.0px;overflow:visible" width="32" height="32" viewBox="0 0 32 32"><path d="M13 12 Q16 10 19.5 12 Q24 17 28 21 Q30.5 25 26 28 Q20 30.5 16 30 Q10 30.5 6 28 Q2 25 4.5 21 Q8.5 16 13 12 Z" fill="#2f7fd6"/><path d="M6 21 Q16 14 27 21 Q20 18 16 18 Q11 18 6 21Z" fill="#5aa6f0"/><path d="M11 18.5 Q16 21 21 18.5" fill="none" stroke="#fff" stroke-width="1.3"/><ellipse cx="15.9" cy="7.6" rx="4.7" ry="3.3" fill="none" stroke="#f4f4f4" stroke-width="1.4"/></svg>
<svg style="position:absolute;left:1086.0px;top:101.0px;overflow:visible" width="32" height="32" viewBox="0 0 32 32"><clipPath id="cps"><circle cx="16" cy="16.5" r="13"/></clipPath><g clip-path="url(#cps)"><path d="M4 14 L13 4" stroke="#e8e8e8" stroke-width="1.3"/><path d="M4 19 L18 5" stroke="#e8e8e8" stroke-width="1.3"/><path d="M5 23 L22 6" stroke="#e8e8e8" stroke-width="1.3"/><path d="M7 26 L25 8" stroke="#e8e8e8" stroke-width="1.3"/><path d="M10 28 L27 11" stroke="#e8e8e8" stroke-width="1.3"/><path d="M14 29 L28 16" stroke="#e8e8e8" stroke-width="1.3"/><path d="M19 29 L28 21" stroke="#e8e8e8" stroke-width="1.3"/></g><path transform="translate(16.5 17.5) scale(9.5)" d="M0 -1 L0.2245 -0.309 L0.951 -0.309 L0.363 0.118 L0.588 0.809 L0 0.382 L-0.588 0.809 L-0.363 0.118 L-0.951 -0.309 L-0.2245 -0.309 Z" fill="#333" stroke="#e84a2a" stroke-width="0.2"/></svg>
<svg style="position:absolute;left:1113px;top:129.5px;overflow:visible" width="7" height="7" viewBox="0 0 7 7"><path d="M7 0 L7 7 L0 7 Z" fill="#6e6e6e"/></svg>
<svg style="position:absolute;left:1125.0px;top:101.0px;overflow:visible" width="32" height="32" viewBox="0 0 32 32"><path d="M2 6.7 Q12 12 9.6 17.1 Q8 24 2 27.6" fill="none" stroke="#eee" stroke-width="1.4"/><path d="M2 6.7 L13.8 9.5 M2 27.6 L13.8 24.1" stroke="#ccc" stroke-width="1"/><circle cx="13.8" cy="9.5" r="1.7" fill="#333" stroke="#eee" stroke-width="1.1"/><circle cx="13.8" cy="24.1" r="1.7" fill="#333" stroke="#eee" stroke-width="1.1"/><path d="M15.9 17.1 H23" stroke="#f06a2a" stroke-width="1.8"/><path d="M20 13.5 L24 17.1 L20 20.7" fill="none" stroke="#f06a2a" stroke-width="1.8"/><path d="M23.6 6.7 Q33 17 23.6 27.6" fill="none" stroke="#e8d44a" stroke-width="1.6"/></svg>
<svg style="position:absolute;left:1152.5px;top:129.5px;overflow:visible" width="7" height="7" viewBox="0 0 7 7"><path d="M7 0 L7 7 L0 7 Z" fill="#6e6e6e"/></svg>
<svg style="position:absolute;left:1165.0px;top:101.0px;overflow:visible" width="32" height="32" viewBox="0 0 32 32"><path d="M6.5 27.6 V15.7 Q7 7 14.2 6.7" fill="none" stroke="#e8e8e8" stroke-width="1.6"/><path d="M6.5 27.6 H13" stroke="#e8e8e8" stroke-width="1.6"/><path d="M28.2 27.6 V15.7 Q27.7 7 20.5 6.7" fill="none" stroke="#e8d44a" stroke-width="1.6"/><path d="M28.2 27.6 H21.5" stroke="#e8d44a" stroke-width="1.6"/><path d="M17 1.8 V31.8" stroke="#e06a3a" stroke-width="1.6" stroke-dasharray="2.5 1.5"/></svg>
<svg style="position:absolute;left:1206.0px;top:101.0px;overflow:visible" width="32" height="32" viewBox="0 0 32 32"><rect x="3.8" y="4.9" width="24.3" height="24.1" fill="none" stroke="#505050" stroke-width="1.8" stroke-dasharray="2.6 2.4"/><path d="M8 8.8 H20.5 V15 H14 V21.3 H8 Z" fill="#252525"/><rect x="14.2" y="15" width="9.8" height="9.8" fill="#666"/></svg>
<svg style="position:absolute;left:1233.5px;top:129.5px;overflow:visible" width="7" height="7" viewBox="0 0 7 7"><path d="M7 0 L7 7 L0 7 Z" fill="#6e6e6e"/></svg>
<svg style="position:absolute;left:1246.0px;top:101.0px;overflow:visible" width="32" height="32" viewBox="0 0 32 32"><circle cx="20.9" cy="19.9" r="9" fill="none" stroke="#5a5a5a" stroke-width="1"/><path d="M20.9 10.9 V19.9 H11.9 A9 9 0 0 1 20.9 10.9 Z" fill="#3c3c3c" stroke="#666" stroke-width="1"/><path d="M2 6.7 H19 M2 22.7 H14" stroke="#454545" stroke-width="1" stroke-dasharray="1.5 1"/></svg>
<svg style="position:absolute;left:1273px;top:129.5px;overflow:visible" width="7" height="7" viewBox="0 0 7 7"><path d="M7 0 L7 7 L0 7 Z" fill="#6e6e6e"/></svg>
<svg style="position:absolute;left:1285.0px;top:101.0px;overflow:visible" width="32" height="32" viewBox="0 0 32 32"><path d="M5.6 6.7 H11.2 Q26 6 28.6 13 Q27 26.5 16.7 26.9 H5.6" fill="none" stroke="#777" stroke-width="1.2"/><path d="M5.6 6.7 H10 M5.6 26.9 H14" stroke="#666" stroke-width="2"/><circle cx="11.2" cy="6.8" r="1.6" fill="#111"/><circle cx="28.6" cy="13" r="1.6" fill="#111"/><circle cx="16.7" cy="26.9" r="1.6" fill="#111"/></svg>
<svg style="position:absolute;left:1312.5px;top:129.5px;overflow:visible" width="7" height="7" viewBox="0 0 7 7"><path d="M7 0 L7 7 L0 7 Z" fill="#6e6e6e"/></svg>
<svg style="position:absolute;left:1325.0px;top:101.0px;overflow:visible" width="32" height="32" viewBox="0 0 32 32"><path d="M4.5 10 Q4.5 6.5 8 7.8 L27 15.5 Q29 17 27 18.5 L8 26.3 Q4.5 27.5 4.5 24 Z" fill="none" stroke="#808080" stroke-width="1.2"/></svg>
<svg style="position:absolute;left:1352.5px;top:129.5px;overflow:visible" width="7" height="7" viewBox="0 0 7 7"><path d="M7 0 L7 7 L0 7 Z" fill="#6e6e6e"/></svg>
<svg style="position:absolute;left:1366.0px;top:101.0px;overflow:visible" width="32" height="32" viewBox="0 0 32 32"><rect x="3.3" y="4.3" width="25.5" height="25.4" fill="none" stroke="#808080" stroke-width="1.4"/><rect x="13.9" y="14.8" width="4" height="4" fill="#888"/><path d="M13 9 L15.9 6.8 L18.8 9 M13 24.5 L15.9 26.7 L18.8 24.5 M9.5 14 L7.3 16.8 L9.5 19.6 M22.3 14 L24.5 16.8 L22.3 19.6" fill="none" stroke="#555" stroke-width="1"/></svg>
<svg style="position:absolute;left:1393px;top:129.5px;overflow:visible" width="7" height="7" viewBox="0 0 7 7"><path d="M7 0 L7 7 L0 7 Z" fill="#6e6e6e"/></svg>
<svg style="position:absolute;left:53.599999999999994px;top:165.0px;overflow:visible" width="32" height="32" viewBox="0 0 32 32"><path d="M16.3 3.2 L28.1 10.4 L16.3 17.6 L4.6 10.4 Z" fill="#f2f2f2"/><path d="M4.6 10.4 L16.3 17.6 V30.3 L4.6 24.9 Z" fill="#e2e2e2"/><path d="M28.1 10.4 L16.3 17.6 V30.3 L28.1 24.9 Z" fill="#c4c4c4"/><path d="M12.5 16 H20.1 L16.3 21.5 Z" fill="#e0302a"/></svg>
<svg style="position:absolute;left:93.7px;top:165.0px;overflow:visible" width="32" height="32" viewBox="0 0 32 32"><path d="M16.3 3.2 L28.1 10.4 L16.3 17.6 L4.6 10.4 Z" fill="#333"/><path d="M4.6 10.4 L16.3 17.6 V30.3 L4.6 24.9 Z" fill="#e6e6e6"/><path d="M28.1 10.4 L16.3 17.6 V30.3 L28.1 24.9 Z" fill="#333"/><path d="M16.3 3.2 L28.1 10.4 V24.9 L16.3 30.3 L4.6 24.9 V10.4 Z M4.6 10.4 L16.3 17.6 L28.1 10.4 M16.3 17.6 V30.3" fill="none" stroke="#f0f0f0" stroke-width="1.5" stroke-linejoin="round"/></svg>
<svg style="position:absolute;left:134.0px;top:165.0px;overflow:visible" width="32" height="32" viewBox="0 0 32 32"><path d="M16.3 3.2 L28.1 10.4 L16.3 17.6 L4.6 10.4 Z" fill="#333"/><path d="M4.6 10.4 L16.3 17.6 V30.3 L4.6 24.9 Z" fill="#333"/><path d="M28.1 10.4 L16.3 17.6 V30.3 L28.1 24.9 Z" fill="#bdbdbd"/><path d="M16.3 3.2 L28.1 10.4 V24.9 L16.3 30.3 L4.6 24.9 V10.4 Z M4.6 10.4 L16.3 17.6 L28.1 10.4 M16.3 17.6 V30.3" fill="none" stroke="#f0f0f0" stroke-width="1.5" stroke-linejoin="round"/></svg>
<svg style="position:absolute;left:174.0px;top:165.0px;overflow:visible" width="32" height="32" viewBox="0 0 32 32"><path d="M16.3 3.2 L28.1 10.4 L16.3 17.6 L4.6 10.4 Z" fill="#f2f2f2"/><path d="M4.6 10.4 L16.3 17.6 V30.3 L4.6 24.9 Z" fill="#333"/><path d="M28.1 10.4 L16.3 17.6 V30.3 L28.1 24.9 Z" fill="#333"/><path d="M16.3 3.2 L28.1 10.4 V24.9 L16.3 30.3 L4.6 24.9 V10.4 Z M4.6 10.4 L16.3 17.6 L28.1 10.4 M16.3 17.6 V30.3" fill="none" stroke="#f0f0f0" stroke-width="1.5" stroke-linejoin="round"/></svg>
<div style="position:absolute;left:214px;top:165px;width:1px;height:35px;background:#555"></div>
<svg style="position:absolute;left:221.0px;top:165.0px;overflow:visible" width="32" height="32" viewBox="0 0 32 32"><circle cx="14.7" cy="15" r="10.3" fill="none" stroke="#f0f0f0" stroke-width="1.8"/><path d="M14.7 9 V21 M8.7 15 H20.7" stroke="#f0f0f0" stroke-width="1.8"/><path d="M22 22.5 L28.3 28.5" stroke="#f0f0f0" stroke-width="2.6"/></svg>
<svg style="position:absolute;left:249px;top:192.5px;overflow:visible" width="7" height="7" viewBox="0 0 7 7"><path d="M7 0 L7 7 L0 7 Z" fill="#6e6e6e"/></svg>
<div style="position:absolute;left:261.5px;top:165px;width:1px;height:35px;background:#555"></div>
<svg style="position:absolute;left:269.6px;top:165.0px;overflow:visible" width="32" height="32" viewBox="0 0 32 32"><path d="M16 4.5 C10.5 4.5 7.5 8.5 7.5 13 C7.5 17.5 11.5 20 12.5 25 H19.5 C20.5 20 24.5 17.5 24.5 13 C24.5 8.5 21.5 4.5 16 4.5 Z" fill="#f5c518"/><rect x="12.5" y="25" width="7" height="3.8" fill="#8a6a50"/></svg>
<div style="position:absolute;left:309px;top:165px;width:1px;height:35px;background:#555"></div>
<svg style="position:absolute;left:317.5px;top:165.0px;overflow:visible" width="32" height="32" viewBox="0 0 32 32"><path d="M1.3 18 L15.9 8.3 L31.5 18 L17.9 26.2 Z" fill="#e6e6e6"/><path d="M1.3 18 L17.9 26.2 L31.5 18 V19.8 L17.9 28.2 L1.3 19.8 Z" fill="#b0a848"/></svg>
<svg style="position:absolute;left:357.6px;top:165.0px;overflow:visible" width="32" height="32" viewBox="0 0 32 32"><path d="M15.8 18 V6" stroke="#3a8ae6" stroke-width="2.4"/><path d="M12.5 7 L15.8 2.5 L19.1 7 Z" fill="#3a8ae6"/><path d="M15.8 18 L5.5 23" stroke="#e84a3a" stroke-width="2.4"/><path d="M3 24.8 L6 20.5 L8 25 Z" fill="#e84a3a"/><path d="M15.8 18 L26 23" stroke="#4cae4c" stroke-width="2.4"/><path d="M29 24.8 L26 20.5 L24 25 Z" fill="#4cae4c"/></svg>
<svg style="position:absolute;left:397.8px;top:165.0px;overflow:visible" width="32" height="32" viewBox="0 0 32 32"><path d="M4 8 H12.5 V11 A2.6 2.6 0 1 1 17.5 11 V8 H24 V14.5 H26.5 A2.8 2.8 0 1 1 26.5 20 H24 V27 H18 A2.8 2.8 0 1 0 12 27 H4 Z" fill="#787878"/></svg>
<svg style="position:absolute;left:438.0px;top:165.0px;overflow:visible" width="32" height="32" viewBox="0 0 32 32"><path d="M7 8 V26 Q16 31 25 26 V8 Z" fill="#444"/><ellipse cx="16" cy="8" rx="9" ry="4.2" fill="#505050"/><ellipse cx="16" cy="8.5" rx="5.5" ry="2.5" fill="#2c2c2c"/></svg>
<svg style="position:absolute;left:478.0px;top:165.0px;overflow:visible" width="32" height="32" viewBox="0 0 32 32"><path d="M1.5 15 L16 7 L30 14 L16 22 Z" fill="#777"/><path d="M1.5 15 L16 22 V30 L1.5 23 Z" fill="#5c5c5c"/><path d="M16 22 L30 14 V22 L16 30 Z" fill="#4a4a4a"/></svg>
<svg style="position:absolute;left:518.0px;top:165.0px;overflow:visible" width="32" height="32" viewBox="0 0 32 32"><path d="M1.5 19 L15 12 L30 19 L16 26 Z" fill="#6a6a6a"/><path d="M1.5 19 L16 26 V29 L1.5 22 Z" fill="#4e4e4e"/><path d="M16 26 L30 19 V22 L16 29 Z" fill="#444"/><path d="M3 14 L14 9 V17 L3 21 Z" fill="#5a5a5a"/><rect x="16" y="4" width="3.5" height="15" fill="#888"/><path d="M15 19 Q17.5 23 20.5 19 Z" fill="#888"/></svg>
<svg style="position:absolute;left:558.0px;top:165.0px;overflow:visible" width="32" height="32" viewBox="0 0 32 32"><path d="M2.7 19.4 V5.7 H16.3 V11" fill="none" stroke="#f0f0f0" stroke-width="1.5"/><path d="M2.7 19.4 H10" stroke="#f0f0f0" stroke-width="1.5"/><circle cx="19.3" cy="20.4" r="8.3" fill="none" stroke="#f0f0f0" stroke-width="1.5"/><path d="M16.3 12.5 V19.4 H10" fill="none" stroke="#f0f0f0" stroke-width="1.5"/></svg>
<div style="position:absolute;left:594px;top:162px;width:40px;height:40px;background:#1c1c1c;border:1px solid #5a5a5a;box-sizing:border-box"></div>
<div style="position:absolute;left:634px;top:162px;width:40px;height:40px;background:#1c1c1c;border:1px solid #5a5a5a;box-sizing:border-box"></div>
<svg style="position:absolute;left:598.0px;top:165.0px;overflow:visible" width="32" height="32" viewBox="0 0 32 32"><path transform="translate(15.8 17) scale(12.5 9)" d="M0 -1 L0.2245 -0.309 L0.951 -0.309 L0.363 0.118 L0.588 0.809 L0 0.382 L-0.588 0.809 L-0.363 0.118 L-0.951 -0.309 L-0.2245 -0.309 Z" fill="#3a8ae6"/><path d="M4 14 L12 21 L10 26 L16 23 L22 26 L20 21 L28 14 L28 15.5 L20.5 22 L22.5 27.5 L16 24.5 L9.5 27.5 L11.5 22 L4 15.5 Z" fill="#1f5aa8"/></svg>
<svg style="position:absolute;left:638.0px;top:165.0px;overflow:visible" width="32" height="32" viewBox="0 0 32 32"><path d="M3 19 L16 12 L29 19 L16 26 Z" fill="none" stroke="#e84a3a" stroke-width="1.6"/><path d="M3 13 L16 6 L29 13 L16 20 Z" fill="#3a8ae6"/><path d="M3 13 L16 20 L29 13 V15 L16 22 L3 15 Z" fill="#1f5aa8"/></svg>
<svg style="position:absolute;left:677.6px;top:165.0px;overflow:visible" width="32" height="32" viewBox="0 0 32 32"><path d="M3 17.5 L16 10.5 L29 17.5 L16 24.5 Z" fill="#e84a3a"/><path d="M3 17.5 L16 24.5 L29 17.5 V20 L16 27 L3 20 Z" fill="#b02a20"/><path d="M3 14 L16 7 L29 14 L16 21 Z" fill="none" stroke="#5a9ae8" stroke-width="1.8"/></svg>
<div style="position:absolute;left:717px;top:165px;width:1px;height:35px;background:#555"></div>
<div style="position:absolute;left:722px;top:162px;width:40px;height:40px;background:#1c1c1c;border:1px solid #5a5a5a;box-sizing:border-box"></div>
<svg style="position:absolute;left:726.0px;top:165.0px;overflow:visible" width="32" height="32" viewBox="0 0 32 32"><path d="M2 17 L16 9.5 L30 17 L16 24.5 Z" fill="#f8d860"/><path d="M2 17 L16 24.5 L30 17 V19.5 L16 27 L2 19.5 Z" fill="#d8a020"/></svg>
<svg style="position:absolute;left:766.0px;top:165.0px;overflow:visible" width="32" height="32" viewBox="0 0 32 32"><rect x="3" y="6" width="11" height="11" fill="#5aae3a"/><circle cx="19.5" cy="19.5" r="8.3" fill="#7cc44a" stroke="#333" stroke-width="0.8"/></svg>
<svg style="position:absolute;left:805.6px;top:165.0px;overflow:visible" width="32" height="32" viewBox="0 0 32 32"><path transform="translate(13 14) scale(8.5)" d="M0 -1 L0.2245 -0.309 L0.951 -0.309 L0.363 0.118 L0.588 0.809 L0 0.382 L-0.588 0.809 L-0.363 0.118 L-0.951 -0.309 L-0.2245 -0.309 Z" fill="#f5c518"/><circle cx="19" cy="20" r="5" fill="#333" stroke="#f0f0f0" stroke-width="1.4"/><path d="M19 17 A3 3 0 0 0 19 23 Z" fill="#f5c518"/><path d="M22.5 23.5 L26.5 27.5" stroke="#f0f0f0" stroke-width="1.8"/></svg>
<svg style="position:absolute;left:845.8px;top:165.0px;overflow:visible" width="32" height="32" viewBox="0 0 32 32"><path d="M16 5 L22 15 L16 19 L10 15 Z" fill="#f5c518"/><path d="M10 15 L16 19 L22 15 L26 21 L16 27 L6 21 Z" fill="#e8302a"/><path d="M16 19 V27 L26 21 L22 15 Z" fill="#b82a20"/><path d="M6 21 L16 27 L26 21 L30 24 L16 31 L2 24 Z" fill="#3a8ae6"/><path d="M16 27 L26 21 L30 24 L16 31 Z" fill="#1f5aa8"/></svg>
<svg style="position:absolute;left:886.6px;top:165.0px;overflow:visible" width="32" height="32" viewBox="0 0 32 32"><path d="M2 23 L16 15 L30 21 L16 30 Z" fill="#4cae4c"/><path d="M16 30 L30 21 V23 L16 32 Z" fill="#2a7a2a"/><path d="M3 17 L16 9 L29 15 L16 23 Z" fill="#f5d818"/><path d="M16 23 L29 15 V18 L16 26 Z" fill="#c8a010"/><path d="M5 11 L16 4 L27 9 L16 16 Z" fill="#e8302a"/><path d="M16 16 L27 9 V12 L16 19 Z" fill="#b02a20"/></svg>
<div style="position:absolute;left:930px;top:179.5px;width:122px;height:4px;background:#f0f0f0"></div>
<div style="position:absolute;left:1051px;top:172.5px;width:7px;height:19px;background:#f0f0f0;border-radius:1px"></div>
<svg style="position:absolute;left:0px;top:150px;overflow:visible" width="38" height="40" viewBox="0 0 38 40"><path d="M8 10 L8 10 L27 17 L20.5 19.5 L29.5 28.5 L26.5 31.5 L17.5 22.5 L14.5 29 Z" fill="#f4f4f4"/></svg>
<svg style="position:absolute;left:2.0px;top:194.0px;overflow:visible" width="32" height="32" viewBox="0 0 32 32"><rect x="3.8" y="6" width="4" height="5" fill="none" stroke="#eee" stroke-width="1.2"/><path d="M5.8 11 V25.5" stroke="#eee" stroke-width="1.6"/><path d="M12.8 9 L29 17 L21 19 L18 26 Z" fill="#f4f4f4"/></svg>
<svg style="position:absolute;left:2.0px;top:234.0px;overflow:visible" width="32" height="32" viewBox="0 0 32 32"><path d="M9 9 A10 10 0 0 1 23 8" fill="none" stroke="#6a6a6a" stroke-width="1.2"/><path d="M25 23 A10 10 0 0 1 11 25" fill="none" stroke="#6a6a6a" stroke-width="1.2"/><path d="M21.5 5.5 L24 8.5 L20.5 9.5 M12.5 28 L10 25 L13.5 24" fill="none" stroke="#6a6a6a" stroke-width="1.1"/><path d="M16 10 V24 M9 17 H23" stroke="#606060" stroke-width="1.1" stroke-dasharray="1.5 1"/><path d="M14 12 L16 10 L18 12 M14 22 L16 24 L18 22 M11 15 L9 17 L11 19 M21 15 L23 17 L21 19" fill="none" stroke="#606060" stroke-width="1"/></svg>
<svg style="position:absolute;left:2.0px;top:274.0px;overflow:visible" width="32" height="32" viewBox="0 0 32 32"><path d="M4 2.4 Q16 6 27.6 2.4 Q24 10.5 27.6 19.6 Q16 16 4 19.6 Q7.5 10.5 4 2.4 Z" fill="none" stroke="#f0f0f0" stroke-width="1.5"/><path d="M10.5 3.6 Q12.5 11 10.5 18.5 M16 4.2 V17.6 M21.3 3.6 Q19.3 11 21.3 18.5 M5.5 8 Q16 10.5 26 8 M5.5 14 Q16 11.5 26 14" fill="none" stroke="#f0f0f0" stroke-width="1.2"/></svg>
<div style="position:absolute;left:0px;top:312px;width:38px;height:1px;background:#555"></div>
<svg style="position:absolute;left:2.0px;top:321.0px;overflow:visible" width="32" height="32" viewBox="0 0 32 32"><path d="M10 26 L25.5 8.5 L29.5 12 L14 29.5 Z" fill="#e8402a"/><path d="M25.5 8.5 L27.5 6.2 L31.5 9.8 L29.5 12 Z" fill="#c83020"/><path d="M10 26 L5.5 30.2 L14 29.5 Z" fill="#e8dcc0"/><path d="M5.5 30.2 L7 28.8 L8 29.8 Z" fill="#555"/></svg>
<svg style="position:absolute;left:28px;top:348px;overflow:visible" width="7" height="7" viewBox="0 0 7 7"><path d="M7 0 L7 7 L0 7 Z" fill="#6e6e6e"/></svg>
<svg style="position:absolute;left:2.0px;top:364.0px;overflow:visible" width="32" height="32" viewBox="0 0 32 32"><path d="M10 12 L18 4.5 L29 13 L22 21.5 L14 20 Z" fill="#e9ecf0"/><path d="M11 11 Q3 13 4 22 Q6 15 12 16 Z" fill="#e8501a"/></svg>
<svg style="position:absolute;left:28px;top:388.5px;overflow:visible" width="7" height="7" viewBox="0 0 7 7"><path d="M7 0 L7 7 L0 7 Z" fill="#6e6e6e"/></svg>
<svg style="position:absolute;left:2.0px;top:403.0px;overflow:visible" width="32" height="32" viewBox="0 0 32 32"><rect x="1" y="4.5" width="14.8" height="16" rx="3" fill="#eef0f2"/><circle cx="8.5" cy="12.5" r="4.8" fill="#2a3a48"/><path d="M15.8 20.7 H29 V16.5" fill="none" stroke="#e0e0e0" stroke-width="1.1"/></svg>
<svg style="position:absolute;left:28px;top:429.5px;overflow:visible" width="7" height="7" viewBox="0 0 7 7"><path d="M7 0 L7 7 L0 7 Z" fill="#6e6e6e"/></svg>
<div style="position:absolute;left:0px;top:441px;width:38px;height:1px;background:#555"></div>
<svg style="position:absolute;left:2.0px;top:449.0px;overflow:visible" width="32" height="32" viewBox="0 0 32 32"><path d="M15.8 28.9 L3.9 17.6 L8.4 5.8 L17.2 10.2 L24.6 5.8 L26.1 18.5" fill="none" stroke="#f0f0f0" stroke-width="1.5"/><path d="M22.5 15.5 L26.1 19.5 L29.5 15.5" fill="none" stroke="#f0f0f0" stroke-width="1.5"/></svg>
<div style="position:absolute;left:5.9px;top:494.7px;width:23.7px;height:22.8px;border:1.6px solid #f0f0f0;box-sizing:border-box"></div>
<svg style="position:absolute;left:2.0px;top:530.0px;overflow:visible" width="32" height="32" viewBox="0 0 32 32"><circle cx="15.8" cy="15.9" r="11.8" fill="none" stroke="#f0f0f0" stroke-width="1.6"/></svg>
<svg style="position:absolute;left:28px;top:557px;overflow:visible" width="7" height="7" viewBox="0 0 7 7"><path d="M7 0 L7 7 L0 7 Z" fill="#6e6e6e"/></svg>
<svg style="position:absolute;left:2.0px;top:569.0px;overflow:visible" width="32" height="32" viewBox="0 0 32 32"><polygon points="15.80,5.10 27.69,13.74 23.15,27.71 8.45,27.71 3.91,13.74" fill="none" stroke="#f0f0f0" stroke-width="1.6"/></svg>
<svg style="position:absolute;left:28px;top:596.8px;overflow:visible" width="7" height="7" viewBox="0 0 7 7"><path d="M7 0 L7 7 L0 7 Z" fill="#6e6e6e"/></svg>
<svg style="position:absolute;left:2.0px;top:609.0px;overflow:visible" width="32" height="32" viewBox="0 0 32 32"><path d="M8.4 7 Q26 7 26.6 20.5 Q27 25 24.6 24.8" fill="none" stroke="#f0f0f0" stroke-width="1.6"/></svg>
<div style="position:absolute;left:4px;top:647px;width:28px;text-align:center;font-family:'Liberation Serif',serif;font-size:36px;line-height:36px;color:#f0f0f0">T</div>
<div style="position:absolute;left:0px;top:688px;width:38px;height:1px;background:#555"></div>
<svg style="position:absolute;left:2.0px;top:699.0px;overflow:visible" width="32" height="32" viewBox="0 0 32 32"><path d="M16 0.5 C12 7 6.5 12 6.5 19.5 A9.5 9.5 0 0 0 25.5 19.5 C25.5 12 20 7 16 0.5 Z" fill="#f5b818" stroke="#fff2c0" stroke-width="1.2"/></svg>
<svg style="position:absolute;left:2.0px;top:739.0px;overflow:visible" width="32" height="32" viewBox="0 0 32 32"><path d="M12 4 L21 2 Q27 2.5 27.5 8 L27 15 Q25.5 21 19 21.5 L14 22 L8 30.5 Q6.5 31.5 5.8 30 L11.5 19.5 Q8 19 6 17 L10.5 15.5 Q6.5 15 5.5 12.5 L11 11.5 Q7 10.5 6.5 8 L12.5 7.5 Q9.5 6 12 4 Z" fill="#f2f2f2"/><path d="M11 11.5 L17 11 M10.5 15.5 L17 15 M12.5 7.5 L17 7.3" stroke="#333" stroke-width="0.9"/></svg>
<svg style="position:absolute;left:2.0px;top:779.0px;overflow:visible" width="32" height="32" viewBox="0 0 32 32"><path d="M18 11 L25 4 L28.5 7.5 L21.5 14.5 Z" fill="#7a7a7a"/><path d="M18 11 L21.5 14.5 L9 25 L7 23 Z" fill="#b8b8b8"/><path d="M5.8 26 Q12 22 17 25 Q22 28 25.3 26.8" fill="none" stroke="#f0f0f0" stroke-width="1.4"/></svg>
<svg style="position:absolute;left:2.0px;top:809.0px;overflow:visible" width="32" height="32" viewBox="0 0 32 32"><path d="M12.5 12 H24.5 L18.5 17 Z M12.5 17 H24.5 L18.5 22 Z" fill="#5a5a5a"/></svg>
<div style="position:absolute;left:60.6px;top:814.5px;width:23.7px;height:18.4px;background:#fff"></div>
<div style="position:absolute;left:45.3px;top:802.2px;width:24.4px;height:19.3px;background:#000;border:1px solid #777;box-sizing:border-box"></div>
<svg style="position:absolute;left:72px;top:802px;overflow:visible" width="14" height="12" viewBox="0 0 14 12"><rect x="1" y="1" width="7" height="6" rx="2" fill="none" stroke="#f0f0f0" stroke-width="1.1"/><rect x="5" y="4.5" width="7" height="6" rx="2" fill="none" stroke="#f0f0f0" stroke-width="1.1"/></svg>
<svg style="position:absolute;left:46px;top:824px;overflow:visible" width="15" height="12" viewBox="0 0 15 12"><path d="M2 1 V9 H12" fill="none" stroke="#f0f0f0" stroke-width="1.1"/><path d="M0 3.5 L2 1 L4 3.5 M9.5 7 L12 9 L9.5 11" fill="none" stroke="#f0f0f0" stroke-width="1.1"/></svg>
<div style="position:absolute;left:95px;top:803px;width:30px;height:30px;background:#000000;border:1px solid #5a5a5a;box-sizing:border-box"></div>
<div style="position:absolute;left:130px;top:803px;width:30px;height:30px;background:#ffffff;border:1px solid #5a5a5a;box-sizing:border-box"></div>
<div style="position:absolute;left:165px;top:803px;width:30px;height:30px;background:#00ffff;border:1px solid #5a5a5a;box-sizing:border-box"></div>
<div style="position:absolute;left:200px;top:803px;width:30px;height:30px;background:#3344dd;border:1px solid #5a5a5a;box-sizing:border-box"></div>
<div style="position:absolute;left:235px;top:803px;width:30px;height:30px;background:#5cbb55;border:1px solid #5a5a5a;box-sizing:border-box"></div>
<div style="position:absolute;left:270px;top:803px;width:30px;height:30px;background:#dd1122;border:1px solid #5a5a5a;box-sizing:border-box"></div>
<div style="position:absolute;left:305px;top:803px;width:30px;height:30px;background:#a030dd;border:1px solid #5a5a5a;box-sizing:border-box"></div>
<div style="position:absolute;left:340px;top:803px;width:30px;height:30px;background:#ffff77;border:1px solid #5a5a5a;box-sizing:border-box"></div>
<div style="position:absolute;left:375px;top:803px;width:30px;height:30px;background:#b09a38;border:1px solid #5a5a5a;box-sizing:border-box"></div>
<div style="position:absolute;left:410px;top:803px;width:30px;height:30px;background:#f8c820;border:1px solid #5a5a5a;box-sizing:border-box"></div>
<div style="position:absolute;left:1387.5px;top:142px;font-size:13px;line-height:15px;color:#f4f4f4;font-weight:bold;white-space:nowrap;transform:scaleX(1.0000);transform-origin:0 0;">?</div>
<svg style="position:absolute;left:1404px;top:143px;overflow:visible" width="11" height="12" viewBox="0 0 11 12"><path d="M2.5 1 H8.5 M3.5 1 V7 M7.5 1 V7 M1 7 H10 M5.5 7 V11.5" fill="none" stroke="#f4f4f4" stroke-width="1.5"/></svg>
<svg style="position:absolute;left:1421px;top:144px;overflow:visible" width="10" height="10" viewBox="0 0 10 10"><path d="M1 1 L9 9 M9 1 L1 9" stroke="#f4f4f4" stroke-width="1.6"/></svg>
<svg style="position:absolute;left:1162.8px;top:162px;overflow:visible" width="13" height="16" viewBox="0 0 13 16"><path d="M0 0 H8.5 L12.5 4 V16 H0 Z" fill="#e9ecf0"/><path d="M8.5 0 V4 H12.5 Z" fill="#c4cad2"/></svg>
<div style="position:absolute;left:1182.3px;top:162.5px;font-size:12px;line-height:14px;color:#eaeaea;font-weight:normal;white-space:nowrap;transform:scaleX(1.0009);transform-origin:0 0;">frame</div>
<svg style="position:absolute;left:1170.5px;top:186.5px;overflow:visible" width="7" height="9" viewBox="0 0 7 9"><path d="M1 1 L6 4.5 L1 8 Z" fill="none" stroke="#f0f0f0" stroke-width="1.2"/></svg>
<svg style="position:absolute;left:1183px;top:181.5px;overflow:visible" width="18" height="18" viewBox="0 0 18 18"><path d="M1 11.5 V1 H11 V5" fill="none" stroke="#e0e0e0" stroke-width="1.2"/><path d="M1 11.5 H5" stroke="#e0e0e0" stroke-width="1.2"/><circle cx="11" cy="11" r="6" fill="none" stroke="#e0e0e0" stroke-width="1.2"/><path d="M11 6.5 V11 H6.5" fill="none" stroke="#e0e0e0" stroke-width="1.2"/></svg>
<div style="position:absolute;left:1205.2px;top:182.5px;font-size:12px;line-height:14px;color:#eaeaea;font-weight:normal;white-space:nowrap;transform:scaleX(0.9791);transform-origin:0 0;">Векторы</div>
<svg style="position:absolute;left:1170.5px;top:206px;overflow:visible" width="7" height="9" viewBox="0 0 7 9"><path d="M1 1 L6 4.5 L1 8 Z" fill="none" stroke="#f0f0f0" stroke-width="1.2"/></svg>
<svg style="position:absolute;left:1183px;top:201.5px;overflow:visible" width="18" height="18" viewBox="0 0 18 18"><rect x="1" y="0.5" width="10" height="10" fill="#5aae3a"/><circle cx="11" cy="10.5" r="6.3" fill="#7cc44a"/></svg>
<div style="position:absolute;left:1205.2px;top:202.5px;font-size:12px;line-height:14px;color:#eaeaea;font-weight:normal;white-space:nowrap;transform:scaleX(0.9337);transform-origin:0 0;">Растр</div>
<svg style="position:absolute;left:1170px;top:227.5px;overflow:visible" width="7" height="7" viewBox="0 0 7 7"><path d="M6.5 0.5 V6.5 H0.5 Z" fill="#f0f0f0"/></svg>
<svg style="position:absolute;left:1183px;top:221px;overflow:visible" width="18" height="17" viewBox="0 0 18 17"><path transform="translate(9 9.6) scale(8.8)" d="M0.000 -1.000 L0.294 -0.405 L0.951 -0.309 L0.476 0.155 L0.588 0.809 L0.000 0.500 L-0.588 0.809 L-0.476 0.155 L-0.951 -0.309 L-0.294 -0.405 Z" stroke-linejoin="round" fill="#f5c518"/></svg>
<div style="position:absolute;left:1205.2px;top:222.5px;font-size:12px;line-height:14px;color:#f5e66a;font-weight:bold;white-space:nowrap;transform:scaleX(0.9944);transform-origin:0 0;">Лицевой рельеф</div>
<div style="position:absolute;left:1227.6px;top:340px;width:208px;height:20px;background:#5c5c5c"></div>
<svg style="position:absolute;left:1207.9px;top:242.5px;overflow:visible" width="16" height="16" viewBox="0 0 16 16"><path d="M5 1.8 A6.8 6.8 0 0 0 5 14.2 M11 1.8 A6.8 6.8 0 0 1 11 14.2" fill="none" stroke="#e8e8e8" stroke-width="1.5"/><path d="M8 4.5 V11.5 M4.5 8 H11.5" stroke="#e8e8e8" stroke-width="1.5"/></svg>
<div style="position:absolute;left:1228.4px;top:242.5px;font-size:12px;line-height:14px;color:#eaeaea;font-weight:normal;white-space:nowrap;transform:scaleX(0.9806);transform-origin:0 0;">заклепки зубов</div>
<svg style="position:absolute;left:1207.9px;top:262.5px;overflow:visible" width="16" height="16" viewBox="0 0 16 16"><path d="M5 1.8 A6.8 6.8 0 0 0 5 14.2 M11 1.8 A6.8 6.8 0 0 1 11 14.2" fill="none" stroke="#e8e8e8" stroke-width="1.5"/><path d="M8 4.5 V11.5 M4.5 8 H11.5" stroke="#e8e8e8" stroke-width="1.5"/></svg>
<div style="position:absolute;left:1228.4px;top:262.5px;font-size:12px;line-height:14px;color:#eaeaea;font-weight:normal;white-space:nowrap;transform:scaleX(0.9630);transform-origin:0 0;">зубы</div>
<svg style="position:absolute;left:1207.9px;top:282.5px;overflow:visible" width="16" height="16" viewBox="0 0 16 16"><path d="M5 1.8 A6.8 6.8 0 0 0 5 14.2 M11 1.8 A6.8 6.8 0 0 1 11 14.2" fill="none" stroke="#e8e8e8" stroke-width="1.5"/><path d="M8 4.5 V11.5 M4.5 8 H11.5" stroke="#e8e8e8" stroke-width="1.5"/></svg>
<div style="position:absolute;left:1228.4px;top:282.5px;font-size:12px;line-height:14px;color:#eaeaea;font-weight:normal;white-space:nowrap;transform:scaleX(0.9943);transform-origin:0 0;">заклепки накладок</div>
<svg style="position:absolute;left:1207.9px;top:302.5px;overflow:visible" width="16" height="16" viewBox="0 0 16 16"><path d="M5 1.8 A6.8 6.8 0 0 0 5 14.2 M11 1.8 A6.8 6.8 0 0 1 11 14.2" fill="none" stroke="#e8e8e8" stroke-width="1.5"/><path d="M8 4.5 V11.5 M4.5 8 H11.5" stroke="#e8e8e8" stroke-width="1.5"/></svg>
<div style="position:absolute;left:1228.4px;top:302.5px;font-size:12px;line-height:14px;color:#eaeaea;font-weight:normal;white-space:nowrap;transform:scaleX(0.9948);transform-origin:0 0;">заклепки рамы</div>
<svg style="position:absolute;left:1207.9px;top:322.5px;overflow:visible" width="16" height="16" viewBox="0 0 16 16"><circle cx="8" cy="8" r="6.8" fill="none" stroke="#e8e8e8" stroke-width="1.5"/><path d="M8 1.2 V14.8 M1.2 8 H14.8" stroke="#e8e8e8" stroke-width="1.5"/></svg>
<div style="position:absolute;left:1228.4px;top:322.5px;font-size:12px;line-height:14px;color:#eaeaea;font-weight:normal;white-space:nowrap;transform:scaleX(0.9783);transform-origin:0 0;">накладки</div>
<svg style="position:absolute;left:1207.9px;top:342.5px;overflow:visible" width="16" height="16" viewBox="0 0 16 16"><path d="M5 1.8 A6.8 6.8 0 0 0 5 14.2 M11 1.8 A6.8 6.8 0 0 1 11 14.2" fill="none" stroke="#e8e8e8" stroke-width="1.5"/><path d="M8 4.5 V11.5 M4.5 8 H11.5" stroke="#e8e8e8" stroke-width="1.5"/></svg>
<div style="position:absolute;left:1228.4px;top:342.5px;font-size:12px;line-height:14px;color:#f5e66a;font-weight:bold;white-space:nowrap;transform:scaleX(0.9391);transform-origin:0 0;">рама</div>
<svg style="position:absolute;left:1170px;top:367.5px;overflow:visible" width="7" height="7" viewBox="0 0 7 7"><path d="M6.5 0.5 V6.5 H0.5 Z" fill="#f0f0f0"/></svg>
<svg style="position:absolute;left:1183px;top:361px;overflow:visible" width="18" height="17" viewBox="0 0 18 17"><path transform="translate(9 9.6) scale(8.8)" d="M0.000 -1.000 L0.294 -0.405 L0.951 -0.309 L0.476 0.155 L0.588 0.809 L0.000 0.500 L-0.588 0.809 L-0.476 0.155 L-0.951 -0.309 L-0.294 -0.405 Z" stroke-linejoin="round" fill="#f5c518"/></svg>
<div style="position:absolute;left:1205.2px;top:362.5px;font-size:12px;line-height:14px;color:#eaeaea;font-weight:normal;white-space:nowrap;transform:scaleX(0.9756);transform-origin:0 0;">Обратный рельеф</div>
<svg style="position:absolute;left:1207.9px;top:382.5px;overflow:visible" width="16" height="16" viewBox="0 0 16 16"><path d="M5 1.8 A6.8 6.8 0 0 0 5 14.2 M11 1.8 A6.8 6.8 0 0 1 11 14.2" fill="none" stroke="#e8e8e8" stroke-width="1.5"/><path d="M4.5 8 H11.5" stroke="#e8e8e8" stroke-width="1.5"/></svg>
<div style="position:absolute;left:1228.2px;top:382.5px;font-size:12px;line-height:14px;color:#eaeaea;font-weight:normal;white-space:nowrap;transform:scaleX(0.9645);transform-origin:0 0;">Рельефный слой 1</div>
<svg style="position:absolute;left:1207.9px;top:402.5px;overflow:visible" width="16" height="16" viewBox="0 0 16 16"><path d="M5 1.8 A6.8 6.8 0 0 0 5 14.2 M11 1.8 A6.8 6.8 0 0 1 11 14.2" fill="none" stroke="#e8e8e8" stroke-width="1.5"/><path d="M8 4.5 V11.5 M4.5 8 H11.5" stroke="#e8e8e8" stroke-width="1.5"/></svg>
<div style="position:absolute;left:1228.2px;top:402.5px;font-size:12px;line-height:14px;color:#f5e66a;font-weight:bold;white-space:nowrap;transform:scaleX(0.9557);transform-origin:0 0;">Рельефный слой</div>
<svg style="position:absolute;left:1183px;top:421px;overflow:visible" width="18" height="17" viewBox="0 0 18 17"><path transform="translate(9 9.6) scale(8.8)" d="M0.000 -1.000 L0.294 -0.405 L0.951 -0.309 L0.476 0.155 L0.588 0.809 L0.000 0.500 L-0.588 0.809 L-0.476 0.155 L-0.951 -0.309 L-0.294 -0.405 Z" stroke-linejoin="round" fill="#3aa8e8"/></svg>
<div style="position:absolute;left:1205.2px;top:422.5px;font-size:12px;line-height:14px;color:#eaeaea;font-weight:normal;white-space:nowrap;transform:scaleX(0.9966);transform-origin:0 0;">Шаблон</div>
<svg style="position:absolute;left:1170.5px;top:446px;overflow:visible" width="7" height="9" viewBox="0 0 7 9"><path d="M1 1 L6 4.5 L1 8 Z" fill="none" stroke="#f0f0f0" stroke-width="1.2"/></svg>
<svg style="position:absolute;left:1184px;top:442px;overflow:visible" width="17" height="17" viewBox="0 0 17 17"><rect x="0.3" y="0" width="6.5" height="6.5" fill="#eee"/><rect x="8.8" y="0" width="6.5" height="6.5" fill="#eee"/><rect x="8.8" y="8.8" width="6.5" height="6.5" fill="#eee"/></svg>
<div style="position:absolute;left:1205.2px;top:442.5px;font-size:12px;line-height:14px;color:#eaeaea;font-weight:normal;white-space:nowrap;transform:scaleX(0.9855);transform-origin:0 0;">Листы</div>
<svg style="position:absolute;left:1188px;top:461px;overflow:visible" width="8" height="17" viewBox="0 0 8 17"><path d="M0.5 0 H7 V12 Q7 15.5 3.75 16.5 Q0.5 15.5 0.5 12 Z" fill="#e8e8e8"/><path d="M0.5 4 L7 1 M0.5 8 L7 5 M0.5 12 L7 9 M1.5 15 L7 13" stroke="#555" stroke-width="1.2"/></svg>
<div style="position:absolute;left:1205.5px;top:462.5px;font-size:12px;line-height:14px;color:#eaeaea;font-weight:normal;white-space:nowrap;transform:scaleX(0.9849);transform-origin:0 0;">Траектории</div>
<svg style="position:absolute;left:1395px;top:183px;overflow:visible" width="14" height="14" viewBox="0 0 14 14"><path d="M7 0 V14 M0 7 H14" stroke="#f4f4f4" stroke-width="2"/></svg>
<svg style="position:absolute;left:1416px;top:182.8px;overflow:visible" width="10" height="16" viewBox="0 0 10 16"><path d="M5 0.5 C2 0.5 0.5 3 0.5 5.5 C0.5 8.5 3 10 3.5 13 H6.5 C7 10 9.5 8.5 9.5 5.5 C9.5 3 8 0.5 5 0.5 Z" fill="none" stroke="#d8b830" stroke-width="1"/><rect x="3.3" y="13" width="3.4" height="2.3" fill="#9a8040"/></svg>
<svg style="position:absolute;left:1422.5px;top:181.2px;overflow:visible" width="10" height="16" viewBox="0 0 10 16"><path d="M5 0.5 C2 0.5 0.5 3 0.5 5.5 C0.5 8.5 3 10 3.5 13 H6.5 C7 10 9.5 8.5 9.5 5.5 C9.5 3 8 0.5 5 0.5 Z" fill="none" stroke="#d8b830" stroke-width="1"/><rect x="3.3" y="13" width="3.4" height="2.3" fill="#9a8040"/></svg>
<svg style="position:absolute;left:1395px;top:203px;overflow:visible" width="14" height="14" viewBox="0 0 14 14"><path d="M7 0 V14 M0 7 H14" stroke="#f4f4f4" stroke-width="2"/></svg>
<svg style="position:absolute;left:1416px;top:202.8px;overflow:visible" width="10" height="16" viewBox="0 0 10 16"><path d="M5 0.5 C2 0.5 0.5 3 0.5 5.5 C0.5 8.5 3 10 3.5 13 H6.5 C7 10 9.5 8.5 9.5 5.5 C9.5 3 8 0.5 5 0.5 Z" fill="#f5c518" /><rect x="3.3" y="13" width="3.4" height="2.3" fill="#9a8040"/></svg>
<svg style="position:absolute;left:1422.5px;top:201.2px;overflow:visible" width="10" height="16" viewBox="0 0 10 16"><path d="M5 0.5 C2 0.5 0.5 3 0.5 5.5 C0.5 8.5 3 10 3.5 13 H6.5 C7 10 9.5 8.5 9.5 5.5 C9.5 3 8 0.5 5 0.5 Z" fill="#f5c518" /><rect x="3.3" y="13" width="3.4" height="2.3" fill="#9a8040"/></svg>
<svg style="position:absolute;left:1372.8px;top:223.5px;overflow:visible" width="14" height="14" viewBox="0 0 14 14"><path d="M7 0 V14 M0 7 H14" stroke="#f4f4f4" stroke-width="2"/></svg>
<svg style="position:absolute;left:1394.5px;top:222.4px;overflow:visible" width="6.2" height="6.2" viewBox="0 0 6.2 6.2"><path d="M3.1 0 V6.2 M0 3.1 H6.2" stroke="#f4f4f4" stroke-width="1.3"/></svg>
<svg style="position:absolute;left:1394.5px;top:231.1px;overflow:visible" width="6.2" height="6.2" viewBox="0 0 6.2 6.2"><path d="M3.1 0 V6.2 M0 3.1 H6.2" stroke="#f4f4f4" stroke-width="1.3"/></svg>
<svg style="position:absolute;left:1403.2px;top:222.4px;overflow:visible" width="6.2" height="6.2" viewBox="0 0 6.2 6.2"><path d="M3.1 0 V6.2 M0 3.1 H6.2" stroke="#f4f4f4" stroke-width="1.3"/></svg>
<svg style="position:absolute;left:1403.2px;top:231.1px;overflow:visible" width="6.2" height="6.2" viewBox="0 0 6.2 6.2"><path d="M3.1 0 V6.2 M0 3.1 H6.2" stroke="#f4f4f4" stroke-width="1.3"/></svg>
<svg style="position:absolute;left:1416px;top:222.8px;overflow:visible" width="10" height="16" viewBox="0 0 10 16"><path d="M5 0.5 C2 0.5 0.5 3 0.5 5.5 C0.5 8.5 3 10 3.5 13 H6.5 C7 10 9.5 8.5 9.5 5.5 C9.5 3 8 0.5 5 0.5 Z" fill="#f5c518" /><rect x="3.3" y="13" width="3.4" height="2.3" fill="#9a8040"/></svg>
<svg style="position:absolute;left:1422.5px;top:221.2px;overflow:visible" width="10" height="16" viewBox="0 0 10 16"><path d="M5 0.5 C2 0.5 0.5 3 0.5 5.5 C0.5 8.5 3 10 3.5 13 H6.5 C7 10 9.5 8.5 9.5 5.5 C9.5 3 8 0.5 5 0.5 Z" fill="#f5c518" /><rect x="3.3" y="13" width="3.4" height="2.3" fill="#9a8040"/></svg>
<svg style="position:absolute;left:1419px;top:242px;overflow:visible" width="10" height="16" viewBox="0 0 10 16"><path d="M5 0.5 C2 0.5 0.5 3 0.5 5.5 C0.5 8.5 3 10 3.5 13 H6.5 C7 10 9.5 8.5 9.5 5.5 C9.5 3 8 0.5 5 0.5 Z" fill="#f5c518" /><rect x="3.3" y="13" width="3.4" height="2.3" fill="#9a8040"/></svg>
<svg style="position:absolute;left:1419px;top:262px;overflow:visible" width="10" height="16" viewBox="0 0 10 16"><path d="M5 0.5 C2 0.5 0.5 3 0.5 5.5 C0.5 8.5 3 10 3.5 13 H6.5 C7 10 9.5 8.5 9.5 5.5 C9.5 3 8 0.5 5 0.5 Z" fill="#f5c518" /><rect x="3.3" y="13" width="3.4" height="2.3" fill="#9a8040"/></svg>
<svg style="position:absolute;left:1419px;top:282px;overflow:visible" width="10" height="16" viewBox="0 0 10 16"><path d="M5 0.5 C2 0.5 0.5 3 0.5 5.5 C0.5 8.5 3 10 3.5 13 H6.5 C7 10 9.5 8.5 9.5 5.5 C9.5 3 8 0.5 5 0.5 Z" fill="#f5c518" /><rect x="3.3" y="13" width="3.4" height="2.3" fill="#9a8040"/></svg>
<svg style="position:absolute;left:1419px;top:302px;overflow:visible" width="10" height="16" viewBox="0 0 10 16"><path d="M5 0.5 C2 0.5 0.5 3 0.5 5.5 C0.5 8.5 3 10 3.5 13 H6.5 C7 10 9.5 8.5 9.5 5.5 C9.5 3 8 0.5 5 0.5 Z" fill="#f5c518" /><rect x="3.3" y="13" width="3.4" height="2.3" fill="#9a8040"/></svg>
<svg style="position:absolute;left:1419px;top:322px;overflow:visible" width="10" height="16" viewBox="0 0 10 16"><path d="M5 0.5 C2 0.5 0.5 3 0.5 5.5 C0.5 8.5 3 10 3.5 13 H6.5 C7 10 9.5 8.5 9.5 5.5 C9.5 3 8 0.5 5 0.5 Z" fill="#f5c518" /><rect x="3.3" y="13" width="3.4" height="2.3" fill="#9a8040"/></svg>
<svg style="position:absolute;left:1419px;top:342px;overflow:visible" width="10" height="16" viewBox="0 0 10 16"><path d="M5 0.5 C2 0.5 0.5 3 0.5 5.5 C0.5 8.5 3 10 3.5 13 H6.5 C7 10 9.5 8.5 9.5 5.5 C9.5 3 8 0.5 5 0.5 Z" fill="#f5c518" /><rect x="3.3" y="13" width="3.4" height="2.3" fill="#9a8040"/></svg>
<svg style="position:absolute;left:1372.8px;top:363.5px;overflow:visible" width="14" height="14" viewBox="0 0 14 14"><path d="M7 0 V14 M0 7 H14" stroke="#f4f4f4" stroke-width="2"/></svg>
<svg style="position:absolute;left:1394.5px;top:362.4px;overflow:visible" width="6.2" height="6.2" viewBox="0 0 6.2 6.2"><path d="M3.1 0 V6.2 M0 3.1 H6.2" stroke="#f4f4f4" stroke-width="1.3"/></svg>
<svg style="position:absolute;left:1394.5px;top:371.09999999999997px;overflow:visible" width="6.2" height="6.2" viewBox="0 0 6.2 6.2"><path d="M3.1 0 V6.2 M0 3.1 H6.2" stroke="#f4f4f4" stroke-width="1.3"/></svg>
<svg style="position:absolute;left:1403.2px;top:362.4px;overflow:visible" width="6.2" height="6.2" viewBox="0 0 6.2 6.2"><path d="M3.1 0 V6.2 M0 3.1 H6.2" stroke="#f4f4f4" stroke-width="1.3"/></svg>
<svg style="position:absolute;left:1403.2px;top:371.09999999999997px;overflow:visible" width="6.2" height="6.2" viewBox="0 0 6.2 6.2"><path d="M3.1 0 V6.2 M0 3.1 H6.2" stroke="#f4f4f4" stroke-width="1.3"/></svg>
<svg style="position:absolute;left:1416px;top:362.8px;overflow:visible" width="10" height="16" viewBox="0 0 10 16"><path d="M5 0.5 C2 0.5 0.5 3 0.5 5.5 C0.5 8.5 3 10 3.5 13 H6.5 C7 10 9.5 8.5 9.5 5.5 C9.5 3 8 0.5 5 0.5 Z" fill="#f5c518" /><rect x="3.3" y="13" width="3.4" height="2.3" fill="#9a8040"/></svg>
<svg style="position:absolute;left:1422.5px;top:361.2px;overflow:visible" width="10" height="16" viewBox="0 0 10 16"><path d="M5 0.5 C2 0.5 0.5 3 0.5 5.5 C0.5 8.5 3 10 3.5 13 H6.5 C7 10 9.5 8.5 9.5 5.5 C9.5 3 8 0.5 5 0.5 Z" fill="#f5c518" /><rect x="3.3" y="13" width="3.4" height="2.3" fill="#9a8040"/></svg>
<svg style="position:absolute;left:1419px;top:382px;overflow:visible" width="10" height="16" viewBox="0 0 10 16"><path d="M5 0.5 C2 0.5 0.5 3 0.5 5.5 C0.5 8.5 3 10 3.5 13 H6.5 C7 10 9.5 8.5 9.5 5.5 C9.5 3 8 0.5 5 0.5 Z" fill="#f5c518" /><rect x="3.3" y="13" width="3.4" height="2.3" fill="#9a8040"/></svg>
<svg style="position:absolute;left:1419px;top:402px;overflow:visible" width="10" height="16" viewBox="0 0 10 16"><path d="M5 0.5 C2 0.5 0.5 3 0.5 5.5 C0.5 8.5 3 10 3.5 13 H6.5 C7 10 9.5 8.5 9.5 5.5 C9.5 3 8 0.5 5 0.5 Z" fill="#f5c518" /><rect x="3.3" y="13" width="3.4" height="2.3" fill="#9a8040"/></svg>
<svg style="position:absolute;left:1416px;top:422.8px;overflow:visible" width="10" height="16" viewBox="0 0 10 16"><path d="M5 0.5 C2 0.5 0.5 3 0.5 5.5 C0.5 8.5 3 10 3.5 13 H6.5 C7 10 9.5 8.5 9.5 5.5 C9.5 3 8 0.5 5 0.5 Z" fill="#f5c518" /><rect x="3.3" y="13" width="3.4" height="2.3" fill="#9a8040"/></svg>
<svg style="position:absolute;left:1422.5px;top:421.2px;overflow:visible" width="10" height="16" viewBox="0 0 10 16"><path d="M5 0.5 C2 0.5 0.5 3 0.5 5.5 C0.5 8.5 3 10 3.5 13 H6.5 C7 10 9.5 8.5 9.5 5.5 C9.5 3 8 0.5 5 0.5 Z" fill="#f5c518" /><rect x="3.3" y="13" width="3.4" height="2.3" fill="#9a8040"/></svg>
<svg style="position:absolute;left:1416px;top:443px;overflow:visible" width="14" height="14" viewBox="0 0 14 14"><path d="M7 0 V14 M0 7 H14" stroke="#f4f4f4" stroke-width="2"/></svg>
<div style="position:absolute;left:1156px;top:551px;width:279px;height:22px;background:#30588f"></div>
<div style="position:absolute;left:1182.5px;top:555px;font-size:12px;line-height:14px;color:#f0f0f0;font-weight:normal;white-space:nowrap;transform:scaleX(0.9552);transform-origin:0 0;">рама</div>
<svg style="position:absolute;left:1386px;top:556px;overflow:visible" width="12" height="11" viewBox="0 0 12 11"><path d="M6 0.5 L11.5 5.5 H10 V10.5 H2 V5.5 H0.5 Z" fill="#fff"/></svg>
<svg style="position:absolute;left:1403px;top:557px;overflow:visible" width="12" height="10" viewBox="0 0 12 10"><path d="M0.5 0.5 H11.5 L6 5.5 Z" fill="#fff"/><rect x="0.5" y="8" width="11" height="1.6" fill="#fff"/></svg>
<svg style="position:absolute;left:1420px;top:557px;overflow:visible" width="12" height="10" viewBox="0 0 12 10"><rect x="0.5" y="0.3" width="11" height="1.6" fill="#fff"/><path d="M0.5 9 H11.5 L6 4 Z" fill="#fff"/></svg>
<svg style="position:absolute;left:1162.7px;top:578.7px;overflow:visible" width="32" height="32" viewBox="0 0 32 32"><path d="M16 3 V28.9 M3.2 16 H28.8" stroke="#f8d580" stroke-width="2.8"/></svg>
<svg style="position:absolute;left:1212.0px;top:578.7px;overflow:visible" width="32" height="32" viewBox="0 0 32 32"><rect x="3.5" y="3.3" width="25" height="25.6" fill="none" stroke="#c8c8c8" stroke-width="1.6" stroke-dasharray="2.6 2.2"/><path d="M11 7 V17 M6 12 H16 M20.5 14.5 V24.5 M15.5 19.5 H25.5" stroke="#f8d580" stroke-width="1.6"/></svg>
<svg style="position:absolute;left:1261.5px;top:578.7px;overflow:visible" width="32" height="32" viewBox="0 0 32 32"><path d="M3.5 6 Q3.5 4.7 5 4.7 H11 L13 7 H28.5 V27.5 H3.5 Z" fill="#f8d775"/><path d="M22.5 2 Q15 3 16 13" fill="none" stroke="#333" stroke-width="4"/><path d="M22.5 2 Q15 3 16 13" fill="none" stroke="#f4f4f4" stroke-width="2"/><path d="M11 11 L16 17 L21.5 11" fill="none" stroke="#333" stroke-width="4"/><path d="M11 11 L16 17 L21.5 11" fill="none" stroke="#f4f4f4" stroke-width="2"/></svg>
<svg style="position:absolute;left:1311.3px;top:578.7px;overflow:visible" width="32" height="32" viewBox="0 0 32 32"><path d="M3 3 H29 V29 H7 L3 25 Z" fill="#2f7fd6"/><rect x="8" y="3" width="14" height="13" fill="#e9ecf0"/><rect x="10" y="21.5" width="13" height="7.5" fill="#e9ecf0"/><rect x="12" y="23" width="2" height="4" fill="#2f7fd6"/><path d="M15 16 Q15 6 24 5" fill="none" stroke="#333" stroke-width="4"/><path d="M15 16 Q15 6 24 5" fill="none" stroke="#f4f4f4" stroke-width="2"/><path d="M20 1.5 L25.5 5 L21 10" fill="none" stroke="#f4f4f4" stroke-width="2"/></svg>
<svg style="position:absolute;left:1361.0px;top:578.7px;overflow:visible" width="32" height="32" viewBox="0 0 32 32"><rect x="14" y="3" width="4" height="4" fill="#f0f0f0"/><path d="M16 7 V14 H6 V20 H26" fill="none" stroke="#e8d44a" stroke-width="1.6"/><path d="M6 17 H26 M6 23 H26" stroke="#e8d44a" stroke-width="1.6"/><rect x="4" y="26" width="24" height="2.2" fill="#f0f0f0"/></svg>
<svg style="position:absolute;left:1162.8px;top:624.0px;overflow:visible" width="32" height="32" viewBox="0 0 32 32"><path d="M16 6 V29" stroke="#f4f4f4" stroke-width="2.6"/><path d="M6.5 16 L16 6 L25.5 16" fill="none" stroke="#f4f4f4" stroke-width="2.6"/></svg>
<svg style="position:absolute;left:1212.0px;top:624.0px;overflow:visible" width="32" height="32" viewBox="0 0 32 32"><path d="M16 3 V26" stroke="#8a8a8a" stroke-width="2.6"/><path d="M6.5 16 L16 26 L25.5 16" fill="none" stroke="#8a8a8a" stroke-width="2.6"/></svg>
<svg style="position:absolute;left:1261.8px;top:624.0px;overflow:visible" width="32" height="32" viewBox="0 0 32 32"><path d="M6 4.5 H13 L16.5 8 V21 H6 Z" fill="#c8ccd0"/><path d="M12.5 9.5 H20 L24 13.5 V28.8 H12.5 Z" fill="#e9ecf0"/><path d="M20 9.5 V13.5 H24 Z" fill="#b8bec6"/></svg>
<svg style="position:absolute;left:1311.0px;top:624.0px;overflow:visible" width="32" height="32" viewBox="0 0 32 32"><path d="M1 21 L16 13 L31 21 L16 29 Z" fill="#3a8ae6"/><path d="M1 21 L16 29 L31 21 V24 L16 32 L1 24 Z" fill="#1f5aa8"/><path d="M2 15 L16 8 L30 15 L16 22 Z" fill="#2a6fc8" stroke="#ddd" stroke-width="1.6"/><path d="M16 2 V15" stroke="#f4f4f4" stroke-width="2.2"/><path d="M11.5 10.5 L16 15 L20.5 10.5" fill="none" stroke="#f4f4f4" stroke-width="2.2"/></svg>
<svg style="position:absolute;left:1360.5px;top:624.0px;overflow:visible" width="32" height="32" viewBox="0 0 32 32"><rect x="5" y="3.5" width="11" height="10" fill="#5aae3a"/><circle cx="19" cy="18.5" r="9.5" fill="#7cc44a" stroke="#333" stroke-width="1"/><path d="M3 15.5 H13" stroke="#f4f4f4" stroke-width="2"/><path d="M9.5 11.5 L13.5 15.5 L9.5 19.5" fill="none" stroke="#f4f4f4" stroke-width="2"/></svg>
<svg style="position:absolute;left:1164.0px;top:672.0px;overflow:visible" width="32" height="32" viewBox="0 0 32 32"><path d="M2 2.5 H28 V28.5 H6 L2 24.5 Z" fill="#2f7fd6"/><rect x="7" y="2.5" width="14" height="14" fill="#e9ecf0"/><rect x="9" y="21" width="12" height="7.5" fill="#e9ecf0"/><rect x="11" y="23" width="2" height="4" fill="#2f7fd6"/><path transform="translate(22 22) scale(8.5)" d="M0 -1 L0.2245 -0.309 L0.951 -0.309 L0.363 0.118 L0.588 0.809 L0 0.382 L-0.588 0.809 L-0.363 0.118 L-0.951 -0.309 L-0.2245 -0.309 Z" fill="#f5d815" stroke="#333" stroke-width="0.12"/></svg>
<svg style="position:absolute;left:1212.0px;top:672.0px;overflow:visible" width="32" height="32" viewBox="0 0 32 32"><rect x="1.5" y="3" width="7" height="7" rx="0.8" fill="#eee"/><rect x="1.5" y="22" width="7" height="7" rx="0.8" fill="#eee"/><path d="M8.5 16 H22" stroke="#ccc" stroke-width="1.6"/><path d="M18 12 L22 16 L18 20" fill="none" stroke="#ccc" stroke-width="1.6"/><rect x="21" y="11" width="10" height="10" rx="1" fill="#f8d775"/></svg>
<svg style="position:absolute;left:1262.0px;top:672.0px;overflow:visible" width="32" height="32" viewBox="0 0 32 32"><path d="M5 12 H27 L24.5 31 H7.5 Z" fill="#f08a60"/><path d="M10.5 12 Q10.5 1.5 16 1.5 Q21.5 1.5 21.5 12" fill="none" stroke="#f08a60" stroke-width="2.2"/><path d="M4.5 13.5 H27.5" stroke="#d06a40" stroke-width="0.8"/></svg>
<div style="position:absolute;left:1419px;top:573px;width:16px;height:156px;background:#333"></div>
<svg style="position:absolute;left:1421px;top:589px;overflow:visible" width="12" height="9" viewBox="0 0 12 9"><path d="M1 7.5 L6 2 L11 7.5" fill="none" stroke="#f4f4f4" stroke-width="2"/></svg>
<div style="position:absolute;left:1419px;top:605px;width:16px;height:124px;background:#505050"></div>
<div style="position:absolute;left:1159px;top:730px;font-size:11px;line-height:13px;color:#e0e0e0;font-weight:normal;white-space:nowrap;transform:scaleX(0.9312);transform-origin:0 0;">Имя:</div>
<div style="position:absolute;left:1231px;top:725.3px;width:110px;height:20.5px;background:#2a2a2a;border:1.3px solid #c8c8c8;box-sizing:border-box"></div>
<div style="position:absolute;left:1237.4px;top:729px;font-size:11px;line-height:13px;color:#f4f4f4;font-weight:normal;white-space:nowrap;transform:scaleX(0.9176);transform-origin:0 0;">рама</div>
<div style="position:absolute;left:1350.2px;top:724px;width:69px;height:22.8px;background:#555"></div>
<div style="position:absolute;left:1360.5px;top:729px;font-size:11px;line-height:13px;color:#f0f0f0;font-weight:normal;white-space:nowrap;transform:scaleX(0.9447);transform-origin:0 0;">Применить</div>
<div style="position:absolute;left:1159px;top:756px;font-size:11px;line-height:13px;color:#e0e0e0;font-weight:normal;white-space:nowrap;transform:scaleX(0.9640);transform-origin:0 0;">Режим</div>
<div style="position:absolute;left:1159px;top:769px;font-size:11px;line-height:13px;color:#e0e0e0;font-weight:normal;white-space:nowrap;transform:scaleX(0.9601);transform-origin:0 0;">объединения:</div>
<div style="position:absolute;left:1231.4px;top:757.1px;width:109.6px;height:22.4px;border:1px solid #5a5a5a;box-sizing:border-box"></div>
<svg style="position:absolute;left:1237.9px;top:761px;overflow:visible" width="16" height="16" viewBox="0 0 16 16"><path d="M5 1.8 A6.8 6.8 0 0 0 5 14.2 M11 1.8 A6.8 6.8 0 0 1 11 14.2" fill="none" stroke="#e8e8e8" stroke-width="1.5"/><path d="M8 4.5 V11.5 M4.5 8 H11.5" stroke="#e8e8e8" stroke-width="1.5"/></svg>
<div style="position:absolute;left:1259.6px;top:762px;font-size:11px;line-height:13px;color:#f0f0f0;font-weight:normal;white-space:nowrap;transform:scaleX(0.9522);transform-origin:0 0;">Добавить</div>
<svg style="position:absolute;left:1326px;top:767px;overflow:visible" width="10" height="6" viewBox="0 0 10 6"><path d="M0 0 H10 L5 5.5 Z" fill="#f0f0f0"/></svg>
<div style="position:absolute;left:1156px;top:790px;width:263px;height:16px;background:#30588f"></div>
<div style="position:absolute;left:1159px;top:790.5px;font-size:14px;line-height:16px;color:#f8f8f8;font-weight:normal;white-space:nowrap;transform:scaleX(0.9498);transform-origin:0 0;">Информация</div>
<svg style="position:absolute;left:1406px;top:793px;overflow:visible" width="12" height="8" viewBox="0 0 12 8"><path d="M1 7 L6 2 L11 7" fill="none" stroke="#f4f4f4" stroke-width="1.8"/></svg>
<svg style="position:absolute;left:1420px;top:792px;overflow:visible" width="14" height="10" viewBox="0 0 14 10"><path d="M1.5 2 L7 8 L12.5 2" fill="none" stroke="#f4f4f4" stroke-width="2.6"/></svg>
<div style="position:absolute;left:1159px;top:809px;width:100px;height:12px;background:linear-gradient(90deg,#4a4a4a 0%,#7a7a7a 25%,#9a9c9e 55%,#7a7a7a 85%,#4a4a4a 100%)"></div>
<div style="position:absolute;left:1188.7px;top:821.3px;width:187.3px;height:16.4px;background:#5a5a5a"></div>
<svg style="position:absolute;left:1172px;top:823px;overflow:visible" width="12" height="14" viewBox="0 0 12 14"><path d="M9.5 1.5 L3.5 7 L9.5 12.5" fill="none" stroke="#f4f4f4" stroke-width="2.6"/></svg>
<svg style="position:absolute;left:1391px;top:823px;overflow:visible" width="12" height="14" viewBox="0 0 12 14"><path d="M2.5 1.5 L8.5 7 L2.5 12.5" fill="none" stroke="#f4f4f4" stroke-width="2.6"/></svg>
<svg style="position:absolute;left:40px;top:204px" width="1112" height="589" viewBox="40 204 1112 589"><defs><pattern id="wp" patternUnits="userSpaceOnUse" width="4" height="9"><rect width="4" height="9" fill="#b3a120"/><rect x="1" width="0.9" height="6" fill="#978818"/><rect x="3" y="3" width="0.7" height="6" fill="#a3921a"/></pattern><linearGradient id="fg" gradientUnits="userSpaceOnUse" x1="560" y1="290" x2="660" y2="740"><stop offset="0" stop-color="#e2ca2a"/><stop offset="0.6" stop-color="#e8d230"/><stop offset="1" stop-color="#efdd3e"/></linearGradient></defs><clipPath id="c1"><rect x="0" y="430" width="1435" height="500"/></clipPath><clipPath id="c2"><rect x="0" y="560" width="1435" height="500"/></clipPath><g clip-path="url(#c2)"><path d="M310.0 462.0 L320.0 451.6 L330.0 446.6 L341.0 442.5 L372.1 419.1 L394.5 409.2 L429.3 389.3 L464.0 374.4 L511.3 342.1 L548.6 319.7 L561.0 309.8 L568.5 299.8 L580.9 294.9 L590.0 293.0 L602.6 301.3 L621.8 316.2 L634.5 329.0 L645.2 331.1 L658.0 339.6 L672.9 350.3 L698.4 373.7 L709.1 380.1 L724.0 390.7 L732.5 397.1 L736.7 405.6 L745.3 416.3 L762.3 429.1 L785.7 450.4 L800.0 457.0 L829.0 479.5 L852.4 500.3 L886.2 521.0 L899.2 542.0 L912.0 555.0 L926.0 563.0 L930.0 573.0 L880.0 597.0 L830.0 622.0 L790.0 647.0 L745.0 672.0 L700.0 697.0 L655.0 724.0 L643.5 703.0 L617.5 692.0 L586.0 675.0 L575.8 666.2 L565.4 657.1 L536.7 633.7 L505.5 615.5 L479.4 603.7 L479.4 594.6 L448.1 566.0 L422.1 545.1 L396.0 528.2 L379.1 521.7 L380.4 516.5 L384.3 512.6 L380.4 499.5 L370.0 496.9 L359.6 500.5 L358.0 494.7 L348.0 486.4 L339.8 484.7 L319.9 473.0 L310.0 464.9 Z M357.0 463.0 L372.1 449.0 L384.5 454.0 L385.8 444.0 L409.4 429.1 L449.1 404.2 L491.4 379.4 L518.7 362.0 L531.2 369.4 L528.7 354.5 L570.9 334.6 L578.4 342.1 L583.4 332.1 L588.0 330.0 L600.0 339.6 L623.9 354.5 L623.9 365.2 L649.4 375.8 L647.3 390.7 L662.2 386.5 L679.2 401.4 L709.1 420.5 L726.1 433.3 L743.1 446.1 L758.0 460.5 L795.0 495.0 L821.0 513.3 L839.3 529.0 L868.0 549.8 L870.6 552.4 L862.8 556.6 L833.0 573.2 L811.4 586.4 L786.6 599.7 L770.0 606.3 L765.0 603.8 L762.3 610.3 L731.0 636.3 L702.5 649.3 L674.0 664.4 L660.8 661.0 L664.7 670.0 L641.5 685.4 L630.5 678.0 L599.2 659.7 L578.0 666.0 L588.8 636.3 L562.8 620.7 L564.0 610.2 L536.7 602.4 L526.3 594.6 L500.2 576.4 L466.4 552.9 L440.0 522.8 L406.0 496.3 L382.8 479.8 L359.6 466.5 Z" transform="translate(0 8)" fill="url(#wp)" fill-rule="evenodd"/></g><g clip-path="url(#c2)"><path d="M310.0 462.0 L320.0 451.6 L330.0 446.6 L341.0 442.5 L372.1 419.1 L394.5 409.2 L429.3 389.3 L464.0 374.4 L511.3 342.1 L548.6 319.7 L561.0 309.8 L568.5 299.8 L580.9 294.9 L590.0 293.0 L602.6 301.3 L621.8 316.2 L634.5 329.0 L645.2 331.1 L658.0 339.6 L672.9 350.3 L698.4 373.7 L709.1 380.1 L724.0 390.7 L732.5 397.1 L736.7 405.6 L745.3 416.3 L762.3 429.1 L785.7 450.4 L800.0 457.0 L829.0 479.5 L852.4 500.3 L886.2 521.0 L899.2 542.0 L912.0 555.0 L926.0 563.0 L930.0 573.0 L880.0 597.0 L830.0 622.0 L790.0 647.0 L745.0 672.0 L700.0 697.0 L655.0 724.0 L643.5 703.0 L617.5 692.0 L586.0 675.0 L575.8 666.2 L565.4 657.1 L536.7 633.7 L505.5 615.5 L479.4 603.7 L479.4 594.6 L448.1 566.0 L422.1 545.1 L396.0 528.2 L379.1 521.7 L380.4 516.5 L384.3 512.6 L380.4 499.5 L370.0 496.9 L359.6 500.5 L358.0 494.7 L348.0 486.4 L339.8 484.7 L319.9 473.0 L310.0 464.9 Z M357.0 463.0 L372.1 449.0 L384.5 454.0 L385.8 444.0 L409.4 429.1 L449.1 404.2 L491.4 379.4 L518.7 362.0 L531.2 369.4 L528.7 354.5 L570.9 334.6 L578.4 342.1 L583.4 332.1 L588.0 330.0 L600.0 339.6 L623.9 354.5 L623.9 365.2 L649.4 375.8 L647.3 390.7 L662.2 386.5 L679.2 401.4 L709.1 420.5 L726.1 433.3 L743.1 446.1 L758.0 460.5 L795.0 495.0 L821.0 513.3 L839.3 529.0 L868.0 549.8 L870.6 552.4 L862.8 556.6 L833.0 573.2 L811.4 586.4 L786.6 599.7 L770.0 606.3 L765.0 603.8 L762.3 610.3 L731.0 636.3 L702.5 649.3 L674.0 664.4 L660.8 661.0 L664.7 670.0 L641.5 685.4 L630.5 678.0 L599.2 659.7 L578.0 666.0 L588.8 636.3 L562.8 620.7 L564.0 610.2 L536.7 602.4 L526.3 594.6 L500.2 576.4 L466.4 552.9 L440.0 522.8 L406.0 496.3 L382.8 479.8 L359.6 466.5 Z" transform="translate(0 6.5)" fill="url(#wp)" fill-rule="evenodd"/></g><g clip-path="url(#c1)"><path d="M310.0 462.0 L320.0 451.6 L330.0 446.6 L341.0 442.5 L372.1 419.1 L394.5 409.2 L429.3 389.3 L464.0 374.4 L511.3 342.1 L548.6 319.7 L561.0 309.8 L568.5 299.8 L580.9 294.9 L590.0 293.0 L602.6 301.3 L621.8 316.2 L634.5 329.0 L645.2 331.1 L658.0 339.6 L672.9 350.3 L698.4 373.7 L709.1 380.1 L724.0 390.7 L732.5 397.1 L736.7 405.6 L745.3 416.3 L762.3 429.1 L785.7 450.4 L800.0 457.0 L829.0 479.5 L852.4 500.3 L886.2 521.0 L899.2 542.0 L912.0 555.0 L926.0 563.0 L930.0 573.0 L880.0 597.0 L830.0 622.0 L790.0 647.0 L745.0 672.0 L700.0 697.0 L655.0 724.0 L643.5 703.0 L617.5 692.0 L586.0 675.0 L575.8 666.2 L565.4 657.1 L536.7 633.7 L505.5 615.5 L479.4 603.7 L479.4 594.6 L448.1 566.0 L422.1 545.1 L396.0 528.2 L379.1 521.7 L380.4 516.5 L384.3 512.6 L380.4 499.5 L370.0 496.9 L359.6 500.5 L358.0 494.7 L348.0 486.4 L339.8 484.7 L319.9 473.0 L310.0 464.9 Z M357.0 463.0 L372.1 449.0 L384.5 454.0 L385.8 444.0 L409.4 429.1 L449.1 404.2 L491.4 379.4 L518.7 362.0 L531.2 369.4 L528.7 354.5 L570.9 334.6 L578.4 342.1 L583.4 332.1 L588.0 330.0 L600.0 339.6 L623.9 354.5 L623.9 365.2 L649.4 375.8 L647.3 390.7 L662.2 386.5 L679.2 401.4 L709.1 420.5 L726.1 433.3 L743.1 446.1 L758.0 460.5 L795.0 495.0 L821.0 513.3 L839.3 529.0 L868.0 549.8 L870.6 552.4 L862.8 556.6 L833.0 573.2 L811.4 586.4 L786.6 599.7 L770.0 606.3 L765.0 603.8 L762.3 610.3 L731.0 636.3 L702.5 649.3 L674.0 664.4 L660.8 661.0 L664.7 670.0 L641.5 685.4 L630.5 678.0 L599.2 659.7 L578.0 666.0 L588.8 636.3 L562.8 620.7 L564.0 610.2 L536.7 602.4 L526.3 594.6 L500.2 576.4 L466.4 552.9 L440.0 522.8 L406.0 496.3 L382.8 479.8 L359.6 466.5 Z" transform="translate(0 5.5)" fill="url(#wp)" fill-rule="evenodd"/></g><g><path d="M310.0 462.0 L320.0 451.6 L330.0 446.6 L341.0 442.5 L372.1 419.1 L394.5 409.2 L429.3 389.3 L464.0 374.4 L511.3 342.1 L548.6 319.7 L561.0 309.8 L568.5 299.8 L580.9 294.9 L590.0 293.0 L602.6 301.3 L621.8 316.2 L634.5 329.0 L645.2 331.1 L658.0 339.6 L672.9 350.3 L698.4 373.7 L709.1 380.1 L724.0 390.7 L732.5 397.1 L736.7 405.6 L745.3 416.3 L762.3 429.1 L785.7 450.4 L800.0 457.0 L829.0 479.5 L852.4 500.3 L886.2 521.0 L899.2 542.0 L912.0 555.0 L926.0 563.0 L930.0 573.0 L880.0 597.0 L830.0 622.0 L790.0 647.0 L745.0 672.0 L700.0 697.0 L655.0 724.0 L643.5 703.0 L617.5 692.0 L586.0 675.0 L575.8 666.2 L565.4 657.1 L536.7 633.7 L505.5 615.5 L479.4 603.7 L479.4 594.6 L448.1 566.0 L422.1 545.1 L396.0 528.2 L379.1 521.7 L380.4 516.5 L384.3 512.6 L380.4 499.5 L370.0 496.9 L359.6 500.5 L358.0 494.7 L348.0 486.4 L339.8 484.7 L319.9 473.0 L310.0 464.9 Z M357.0 463.0 L372.1 449.0 L384.5 454.0 L385.8 444.0 L409.4 429.1 L449.1 404.2 L491.4 379.4 L518.7 362.0 L531.2 369.4 L528.7 354.5 L570.9 334.6 L578.4 342.1 L583.4 332.1 L588.0 330.0 L600.0 339.6 L623.9 354.5 L623.9 365.2 L649.4 375.8 L647.3 390.7 L662.2 386.5 L679.2 401.4 L709.1 420.5 L726.1 433.3 L743.1 446.1 L758.0 460.5 L795.0 495.0 L821.0 513.3 L839.3 529.0 L868.0 549.8 L870.6 552.4 L862.8 556.6 L833.0 573.2 L811.4 586.4 L786.6 599.7 L770.0 606.3 L765.0 603.8 L762.3 610.3 L731.0 636.3 L702.5 649.3 L674.0 664.4 L660.8 661.0 L664.7 670.0 L641.5 685.4 L630.5 678.0 L599.2 659.7 L578.0 666.0 L588.8 636.3 L562.8 620.7 L564.0 610.2 L536.7 602.4 L526.3 594.6 L500.2 576.4 L466.4 552.9 L440.0 522.8 L406.0 496.3 L382.8 479.8 L359.6 466.5 Z" transform="translate(0 4.5)" fill="url(#wp)" fill-rule="evenodd"/></g><g><path d="M310.0 462.0 L320.0 451.6 L330.0 446.6 L341.0 442.5 L372.1 419.1 L394.5 409.2 L429.3 389.3 L464.0 374.4 L511.3 342.1 L548.6 319.7 L561.0 309.8 L568.5 299.8 L580.9 294.9 L590.0 293.0 L602.6 301.3 L621.8 316.2 L634.5 329.0 L645.2 331.1 L658.0 339.6 L672.9 350.3 L698.4 373.7 L709.1 380.1 L724.0 390.7 L732.5 397.1 L736.7 405.6 L745.3 416.3 L762.3 429.1 L785.7 450.4 L800.0 457.0 L829.0 479.5 L852.4 500.3 L886.2 521.0 L899.2 542.0 L912.0 555.0 L926.0 563.0 L930.0 573.0 L880.0 597.0 L830.0 622.0 L790.0 647.0 L745.0 672.0 L700.0 697.0 L655.0 724.0 L643.5 703.0 L617.5 692.0 L586.0 675.0 L575.8 666.2 L565.4 657.1 L536.7 633.7 L505.5 615.5 L479.4 603.7 L479.4 594.6 L448.1 566.0 L422.1 545.1 L396.0 528.2 L379.1 521.7 L380.4 516.5 L384.3 512.6 L380.4 499.5 L370.0 496.9 L359.6 500.5 L358.0 494.7 L348.0 486.4 L339.8 484.7 L319.9 473.0 L310.0 464.9 Z M357.0 463.0 L372.1 449.0 L384.5 454.0 L385.8 444.0 L409.4 429.1 L449.1 404.2 L491.4 379.4 L518.7 362.0 L531.2 369.4 L528.7 354.5 L570.9 334.6 L578.4 342.1 L583.4 332.1 L588.0 330.0 L600.0 339.6 L623.9 354.5 L623.9 365.2 L649.4 375.8 L647.3 390.7 L662.2 386.5 L679.2 401.4 L709.1 420.5 L726.1 433.3 L743.1 446.1 L758.0 460.5 L795.0 495.0 L821.0 513.3 L839.3 529.0 L868.0 549.8 L870.6 552.4 L862.8 556.6 L833.0 573.2 L811.4 586.4 L786.6 599.7 L770.0 606.3 L765.0 603.8 L762.3 610.3 L731.0 636.3 L702.5 649.3 L674.0 664.4 L660.8 661.0 L664.7 670.0 L641.5 685.4 L630.5 678.0 L599.2 659.7 L578.0 666.0 L588.8 636.3 L562.8 620.7 L564.0 610.2 L536.7 602.4 L526.3 594.6 L500.2 576.4 L466.4 552.9 L440.0 522.8 L406.0 496.3 L382.8 479.8 L359.6 466.5 Z" transform="translate(0 3)" fill="url(#wp)" fill-rule="evenodd"/></g><g><path d="M310.0 462.0 L320.0 451.6 L330.0 446.6 L341.0 442.5 L372.1 419.1 L394.5 409.2 L429.3 389.3 L464.0 374.4 L511.3 342.1 L548.6 319.7 L561.0 309.8 L568.5 299.8 L580.9 294.9 L590.0 293.0 L602.6 301.3 L621.8 316.2 L634.5 329.0 L645.2 331.1 L658.0 339.6 L672.9 350.3 L698.4 373.7 L709.1 380.1 L724.0 390.7 L732.5 397.1 L736.7 405.6 L745.3 416.3 L762.3 429.1 L785.7 450.4 L800.0 457.0 L829.0 479.5 L852.4 500.3 L886.2 521.0 L899.2 542.0 L912.0 555.0 L926.0 563.0 L930.0 573.0 L880.0 597.0 L830.0 622.0 L790.0 647.0 L745.0 672.0 L700.0 697.0 L655.0 724.0 L643.5 703.0 L617.5 692.0 L586.0 675.0 L575.8 666.2 L565.4 657.1 L536.7 633.7 L505.5 615.5 L479.4 603.7 L479.4 594.6 L448.1 566.0 L422.1 545.1 L396.0 528.2 L379.1 521.7 L380.4 516.5 L384.3 512.6 L380.4 499.5 L370.0 496.9 L359.6 500.5 L358.0 494.7 L348.0 486.4 L339.8 484.7 L319.9 473.0 L310.0 464.9 Z M357.0 463.0 L372.1 449.0 L384.5 454.0 L385.8 444.0 L409.4 429.1 L449.1 404.2 L491.4 379.4 L518.7 362.0 L531.2 369.4 L528.7 354.5 L570.9 334.6 L578.4 342.1 L583.4 332.1 L588.0 330.0 L600.0 339.6 L623.9 354.5 L623.9 365.2 L649.4 375.8 L647.3 390.7 L662.2 386.5 L679.2 401.4 L709.1 420.5 L726.1 433.3 L743.1 446.1 L758.0 460.5 L795.0 495.0 L821.0 513.3 L839.3 529.0 L868.0 549.8 L870.6 552.4 L862.8 556.6 L833.0 573.2 L811.4 586.4 L786.6 599.7 L770.0 606.3 L765.0 603.8 L762.3 610.3 L731.0 636.3 L702.5 649.3 L674.0 664.4 L660.8 661.0 L664.7 670.0 L641.5 685.4 L630.5 678.0 L599.2 659.7 L578.0 666.0 L588.8 636.3 L562.8 620.7 L564.0 610.2 L536.7 602.4 L526.3 594.6 L500.2 576.4 L466.4 552.9 L440.0 522.8 L406.0 496.3 L382.8 479.8 L359.6 466.5 Z" transform="translate(0 1.5)" fill="url(#wp)" fill-rule="evenodd"/></g><path d="M310.0 462.0 L320.0 451.6 L330.0 446.6 L341.0 442.5 L372.1 419.1 L394.5 409.2 L429.3 389.3 L464.0 374.4 L511.3 342.1 L548.6 319.7 L561.0 309.8 L568.5 299.8 L580.9 294.9 L590.0 293.0 L602.6 301.3 L621.8 316.2 L634.5 329.0 L645.2 331.1 L658.0 339.6 L672.9 350.3 L698.4 373.7 L709.1 380.1 L724.0 390.7 L732.5 397.1 L736.7 405.6 L745.3 416.3 L762.3 429.1 L785.7 450.4 L800.0 457.0 L829.0 479.5 L852.4 500.3 L886.2 521.0 L899.2 542.0 L912.0 555.0 L926.0 563.0 L930.0 573.0 L880.0 597.0 L830.0 622.0 L790.0 647.0 L745.0 672.0 L700.0 697.0 L655.0 724.0 L643.5 703.0 L617.5 692.0 L586.0 675.0 L575.8 666.2 L565.4 657.1 L536.7 633.7 L505.5 615.5 L479.4 603.7 L479.4 594.6 L448.1 566.0 L422.1 545.1 L396.0 528.2 L379.1 521.7 L380.4 516.5 L384.3 512.6 L380.4 499.5 L370.0 496.9 L359.6 500.5 L358.0 494.7 L348.0 486.4 L339.8 484.7 L319.9 473.0 L310.0 464.9 Z M357.0 463.0 L372.1 449.0 L384.5 454.0 L385.8 444.0 L409.4 429.1 L449.1 404.2 L491.4 379.4 L518.7 362.0 L531.2 369.4 L528.7 354.5 L570.9 334.6 L578.4 342.1 L583.4 332.1 L588.0 330.0 L600.0 339.6 L623.9 354.5 L623.9 365.2 L649.4 375.8 L647.3 390.7 L662.2 386.5 L679.2 401.4 L709.1 420.5 L726.1 433.3 L743.1 446.1 L758.0 460.5 L795.0 495.0 L821.0 513.3 L839.3 529.0 L868.0 549.8 L870.6 552.4 L862.8 556.6 L833.0 573.2 L811.4 586.4 L786.6 599.7 L770.0 606.3 L765.0 603.8 L762.3 610.3 L731.0 636.3 L702.5 649.3 L674.0 664.4 L660.8 661.0 L664.7 670.0 L641.5 685.4 L630.5 678.0 L599.2 659.7 L578.0 666.0 L588.8 636.3 L562.8 620.7 L564.0 610.2 L536.7 602.4 L526.3 594.6 L500.2 576.4 L466.4 552.9 L440.0 522.8 L406.0 496.3 L382.8 479.8 L359.6 466.5 Z" fill="url(#fg)" fill-rule="evenodd"/><path d="M322.4 371.9 L317.0 385.6 L317.0 402.6 L321.3 415.4 L325.6 430.3 L332.0 440.0 L351.0 442.0 L368.0 441.0 L373.0 431.0 L372.1 414.2 L354.7 406.7 L337.3 394.3 Z" fill="url(#wp)"/><path d="M322.4 371.9 L337.3 394.3 L354.7 406.7 L372.1 414.2 L373.0 429.0 L362.0 429.0 L337.3 424.0 L326.0 412.0 L322.0 395.0 Z" fill="url(#fg)"/><path d="M413.0 333.4 L439.2 342.0 L459.1 349.5 L464.0 362.0 L465.3 383.0 L424.3 383.0 L418.0 372.0 L412.0 358.0 Z" fill="url(#wp)"/><path d="M413.0 333.4 L439.2 342.0 L459.1 349.5 L464.0 362.0 L465.0 369.0 L439.2 369.4 L421.8 364.5 L416.0 355.0 L413.0 349.5 Z" fill="url(#fg)"/><path d="M464.0 283.7 L480.0 282.5 L499.0 284.9 L533.7 294.9 L539.9 304.8 L542.4 324.7 L544.0 337.6 L513.3 337.6 L509.8 331.6 L503.0 316.0 L489.2 307.0 L475.5 303.0 L463.5 302.0 Z" fill="url(#wp)"/><path d="M464.0 283.7 L480.0 282.5 L499.0 284.9 L533.7 294.9 L539.9 304.8 L542.4 324.7 L530.0 327.0 L513.8 327.2 L506.3 312.3 L488.9 297.3 L469.0 289.9 L464.0 288.0 Z" fill="url(#fg)"/><path d="M634.0 694.7 L643.5 689.2 L662.6 677.0 L661.2 663.4 L673.5 666.1 L681.7 682.4 L695.3 701.5 L708.9 712.4 L727.9 723.2 L751.0 731.4 L736.1 732.8 L708.9 730.0 L681.7 726.0 L649.0 720.5 L638.1 712.4 Z" transform="translate(0 15.00)" fill="url(#wp)"/><path d="M634.0 694.7 L643.5 689.2 L662.6 677.0 L661.2 663.4 L673.5 666.1 L681.7 682.4 L695.3 701.5 L708.9 712.4 L727.9 723.2 L751.0 731.4 L736.1 732.8 L708.9 730.0 L681.7 726.0 L649.0 720.5 L638.1 712.4 Z" transform="translate(0 13.50)" fill="url(#wp)"/><path d="M634.0 694.7 L643.5 689.2 L662.6 677.0 L661.2 663.4 L673.5 666.1 L681.7 682.4 L695.3 701.5 L708.9 712.4 L727.9 723.2 L751.0 731.4 L736.1 732.8 L708.9 730.0 L681.7 726.0 L649.0 720.5 L638.1 712.4 Z" transform="translate(0 12.00)" fill="url(#wp)"/><path d="M634.0 694.7 L643.5 689.2 L662.6 677.0 L661.2 663.4 L673.5 666.1 L681.7 682.4 L695.3 701.5 L708.9 712.4 L727.9 723.2 L751.0 731.4 L736.1 732.8 L708.9 730.0 L681.7 726.0 L649.0 720.5 L638.1 712.4 Z" transform="translate(0 10.50)" fill="url(#wp)"/><path d="M634.0 694.7 L643.5 689.2 L662.6 677.0 L661.2 663.4 L673.5 666.1 L681.7 682.4 L695.3 701.5 L708.9 712.4 L727.9 723.2 L751.0 731.4 L736.1 732.8 L708.9 730.0 L681.7 726.0 L649.0 720.5 L638.1 712.4 Z" transform="translate(0 9.00)" fill="url(#wp)"/><path d="M634.0 694.7 L643.5 689.2 L662.6 677.0 L661.2 663.4 L673.5 666.1 L681.7 682.4 L695.3 701.5 L708.9 712.4 L727.9 723.2 L751.0 731.4 L736.1 732.8 L708.9 730.0 L681.7 726.0 L649.0 720.5 L638.1 712.4 Z" transform="translate(0 7.50)" fill="url(#wp)"/><path d="M634.0 694.7 L643.5 689.2 L662.6 677.0 L661.2 663.4 L673.5 666.1 L681.7 682.4 L695.3 701.5 L708.9 712.4 L727.9 723.2 L751.0 731.4 L736.1 732.8 L708.9 730.0 L681.7 726.0 L649.0 720.5 L638.1 712.4 Z" transform="translate(0 6.00)" fill="url(#wp)"/><path d="M634.0 694.7 L643.5 689.2 L662.6 677.0 L661.2 663.4 L673.5 666.1 L681.7 682.4 L695.3 701.5 L708.9 712.4 L727.9 723.2 L751.0 731.4 L736.1 732.8 L708.9 730.0 L681.7 726.0 L649.0 720.5 L638.1 712.4 Z" transform="translate(0 4.50)" fill="url(#wp)"/><path d="M634.0 694.7 L643.5 689.2 L662.6 677.0 L661.2 663.4 L673.5 666.1 L681.7 682.4 L695.3 701.5 L708.9 712.4 L727.9 723.2 L751.0 731.4 L736.1 732.8 L708.9 730.0 L681.7 726.0 L649.0 720.5 L638.1 712.4 Z" transform="translate(0 3.00)" fill="url(#wp)"/><path d="M634.0 694.7 L643.5 689.2 L662.6 677.0 L661.2 663.4 L673.5 666.1 L681.7 682.4 L695.3 701.5 L708.9 712.4 L727.9 723.2 L751.0 731.4 L736.1 732.8 L708.9 730.0 L681.7 726.0 L649.0 720.5 L638.1 712.4 Z" transform="translate(0 1.50)" fill="url(#wp)"/><path d="M634.0 694.7 L643.5 689.2 L662.6 677.0 L661.2 663.4 L673.5 666.1 L681.7 682.4 L695.3 701.5 L708.9 712.4 L727.9 723.2 L751.0 731.4 L736.1 732.8 L708.9 730.0 L681.7 726.0 L649.0 720.5 L638.1 712.4 Z" fill="url(#fg)"/><path d="M700.7 671.5 L714.3 666.1 L730.6 663.4 L741.5 668.8 L755.1 687.9 L768.8 701.5 L778.3 709.6 L766.0 706.9 L741.5 698.8 L722.5 693.3 L703.4 687.9 Z" transform="translate(0 15.00)" fill="url(#wp)"/><path d="M700.7 671.5 L714.3 666.1 L730.6 663.4 L741.5 668.8 L755.1 687.9 L768.8 701.5 L778.3 709.6 L766.0 706.9 L741.5 698.8 L722.5 693.3 L703.4 687.9 Z" transform="translate(0 13.50)" fill="url(#wp)"/><path d="M700.7 671.5 L714.3 666.1 L730.6 663.4 L741.5 668.8 L755.1 687.9 L768.8 701.5 L778.3 709.6 L766.0 706.9 L741.5 698.8 L722.5 693.3 L703.4 687.9 Z" transform="translate(0 12.00)" fill="url(#wp)"/><path d="M700.7 671.5 L714.3 666.1 L730.6 663.4 L741.5 668.8 L755.1 687.9 L768.8 701.5 L778.3 709.6 L766.0 706.9 L741.5 698.8 L722.5 693.3 L703.4 687.9 Z" transform="translate(0 10.50)" fill="url(#wp)"/><path d="M700.7 671.5 L714.3 666.1 L730.6 663.4 L741.5 668.8 L755.1 687.9 L768.8 701.5 L778.3 709.6 L766.0 706.9 L741.5 698.8 L722.5 693.3 L703.4 687.9 Z" transform="translate(0 9.00)" fill="url(#wp)"/><path d="M700.7 671.5 L714.3 666.1 L730.6 663.4 L741.5 668.8 L755.1 687.9 L768.8 701.5 L778.3 709.6 L766.0 706.9 L741.5 698.8 L722.5 693.3 L703.4 687.9 Z" transform="translate(0 7.50)" fill="url(#wp)"/><path d="M700.7 671.5 L714.3 666.1 L730.6 663.4 L741.5 668.8 L755.1 687.9 L768.8 701.5 L778.3 709.6 L766.0 706.9 L741.5 698.8 L722.5 693.3 L703.4 687.9 Z" transform="translate(0 6.00)" fill="url(#wp)"/><path d="M700.7 671.5 L714.3 666.1 L730.6 663.4 L741.5 668.8 L755.1 687.9 L768.8 701.5 L778.3 709.6 L766.0 706.9 L741.5 698.8 L722.5 693.3 L703.4 687.9 Z" transform="translate(0 4.50)" fill="url(#wp)"/><path d="M700.7 671.5 L714.3 666.1 L730.6 663.4 L741.5 668.8 L755.1 687.9 L768.8 701.5 L778.3 709.6 L766.0 706.9 L741.5 698.8 L722.5 693.3 L703.4 687.9 Z" transform="translate(0 3.00)" fill="url(#wp)"/><path d="M700.7 671.5 L714.3 666.1 L730.6 663.4 L741.5 668.8 L755.1 687.9 L768.8 701.5 L778.3 709.6 L766.0 706.9 L741.5 698.8 L722.5 693.3 L703.4 687.9 Z" transform="translate(0 1.50)" fill="url(#wp)"/><path d="M700.7 671.5 L714.3 666.1 L730.6 663.4 L741.5 668.8 L755.1 687.9 L768.8 701.5 L778.3 709.6 L766.0 706.9 L741.5 698.8 L722.5 693.3 L703.4 687.9 Z" fill="url(#fg)"/><path d="M734.7 649.8 L752.4 644.3 L776.9 641.6 L779.6 647.0 L787.8 663.4 L796.0 679.7 L785.1 671.5 L774.2 666.1 L757.9 660.6 L736.1 657.9 Z" transform="translate(0 15.00)" fill="url(#wp)"/><path d="M734.7 649.8 L752.4 644.3 L776.9 641.6 L779.6 647.0 L787.8 663.4 L796.0 679.7 L785.1 671.5 L774.2 666.1 L757.9 660.6 L736.1 657.9 Z" transform="translate(0 13.50)" fill="url(#wp)"/><path d="M734.7 649.8 L752.4 644.3 L776.9 641.6 L779.6 647.0 L787.8 663.4 L796.0 679.7 L785.1 671.5 L774.2 666.1 L757.9 660.6 L736.1 657.9 Z" transform="translate(0 12.00)" fill="url(#wp)"/><path d="M734.7 649.8 L752.4 644.3 L776.9 641.6 L779.6 647.0 L787.8 663.4 L796.0 679.7 L785.1 671.5 L774.2 666.1 L757.9 660.6 L736.1 657.9 Z" transform="translate(0 10.50)" fill="url(#wp)"/><path d="M734.7 649.8 L752.4 644.3 L776.9 641.6 L779.6 647.0 L787.8 663.4 L796.0 679.7 L785.1 671.5 L774.2 666.1 L757.9 660.6 L736.1 657.9 Z" transform="translate(0 9.00)" fill="url(#wp)"/><path d="M734.7 649.8 L752.4 644.3 L776.9 641.6 L779.6 647.0 L787.8 663.4 L796.0 679.7 L785.1 671.5 L774.2 666.1 L757.9 660.6 L736.1 657.9 Z" transform="translate(0 7.50)" fill="url(#wp)"/><path d="M734.7 649.8 L752.4 644.3 L776.9 641.6 L779.6 647.0 L787.8 663.4 L796.0 679.7 L785.1 671.5 L774.2 666.1 L757.9 660.6 L736.1 657.9 Z" transform="translate(0 6.00)" fill="url(#wp)"/><path d="M734.7 649.8 L752.4 644.3 L776.9 641.6 L779.6 647.0 L787.8 663.4 L796.0 679.7 L785.1 671.5 L774.2 666.1 L757.9 660.6 L736.1 657.9 Z" transform="translate(0 4.50)" fill="url(#wp)"/><path d="M734.7 649.8 L752.4 644.3 L776.9 641.6 L779.6 647.0 L787.8 663.4 L796.0 679.7 L785.1 671.5 L774.2 666.1 L757.9 660.6 L736.1 657.9 Z" transform="translate(0 3.00)" fill="url(#wp)"/><path d="M734.7 649.8 L752.4 644.3 L776.9 641.6 L779.6 647.0 L787.8 663.4 L796.0 679.7 L785.1 671.5 L774.2 666.1 L757.9 660.6 L736.1 657.9 Z" transform="translate(0 1.50)" fill="url(#wp)"/><path d="M734.7 649.8 L752.4 644.3 L776.9 641.6 L779.6 647.0 L787.8 663.4 L796.0 679.7 L785.1 671.5 L774.2 666.1 L757.9 660.6 L736.1 657.9 Z" fill="url(#fg)"/><path d="M790.5 608.9 L806.9 603.5 L828.6 592.6 L831.4 603.5 L830.0 611.7 L834.1 628.0 L839.5 644.3 L839.5 649.8 L831.4 641.6 L823.2 636.1 L809.6 632.1 L790.5 630.7 Z" transform="translate(0 16.00)" fill="url(#wp)"/><path d="M790.5 608.9 L806.9 603.5 L828.6 592.6 L831.4 603.5 L830.0 611.7 L834.1 628.0 L839.5 644.3 L839.5 649.8 L831.4 641.6 L823.2 636.1 L809.6 632.1 L790.5 630.7 Z" transform="translate(0 14.40)" fill="url(#wp)"/><path d="M790.5 608.9 L806.9 603.5 L828.6 592.6 L831.4 603.5 L830.0 611.7 L834.1 628.0 L839.5 644.3 L839.5 649.8 L831.4 641.6 L823.2 636.1 L809.6 632.1 L790.5 630.7 Z" transform="translate(0 12.80)" fill="url(#wp)"/><path d="M790.5 608.9 L806.9 603.5 L828.6 592.6 L831.4 603.5 L830.0 611.7 L834.1 628.0 L839.5 644.3 L839.5 649.8 L831.4 641.6 L823.2 636.1 L809.6 632.1 L790.5 630.7 Z" transform="translate(0 11.20)" fill="url(#wp)"/><path d="M790.5 608.9 L806.9 603.5 L828.6 592.6 L831.4 603.5 L830.0 611.7 L834.1 628.0 L839.5 644.3 L839.5 649.8 L831.4 641.6 L823.2 636.1 L809.6 632.1 L790.5 630.7 Z" transform="translate(0 9.60)" fill="url(#wp)"/><path d="M790.5 608.9 L806.9 603.5 L828.6 592.6 L831.4 603.5 L830.0 611.7 L834.1 628.0 L839.5 644.3 L839.5 649.8 L831.4 641.6 L823.2 636.1 L809.6 632.1 L790.5 630.7 Z" transform="translate(0 8.00)" fill="url(#wp)"/><path d="M790.5 608.9 L806.9 603.5 L828.6 592.6 L831.4 603.5 L830.0 611.7 L834.1 628.0 L839.5 644.3 L839.5 649.8 L831.4 641.6 L823.2 636.1 L809.6 632.1 L790.5 630.7 Z" transform="translate(0 6.40)" fill="url(#wp)"/><path d="M790.5 608.9 L806.9 603.5 L828.6 592.6 L831.4 603.5 L830.0 611.7 L834.1 628.0 L839.5 644.3 L839.5 649.8 L831.4 641.6 L823.2 636.1 L809.6 632.1 L790.5 630.7 Z" transform="translate(0 4.80)" fill="url(#wp)"/><path d="M790.5 608.9 L806.9 603.5 L828.6 592.6 L831.4 603.5 L830.0 611.7 L834.1 628.0 L839.5 644.3 L839.5 649.8 L831.4 641.6 L823.2 636.1 L809.6 632.1 L790.5 630.7 Z" transform="translate(0 3.20)" fill="url(#wp)"/><path d="M790.5 608.9 L806.9 603.5 L828.6 592.6 L831.4 603.5 L830.0 611.7 L834.1 628.0 L839.5 644.3 L839.5 649.8 L831.4 641.6 L823.2 636.1 L809.6 632.1 L790.5 630.7 Z" transform="translate(0 1.60)" fill="url(#wp)"/><path d="M790.5 608.9 L806.9 603.5 L828.6 592.6 L831.4 603.5 L830.0 611.7 L834.1 628.0 L839.5 644.3 L839.5 649.8 L831.4 641.6 L823.2 636.1 L809.6 632.1 L790.5 630.7 Z" fill="url(#fg)"/><path d="M830.0 584.4 L836.8 580.4 L850.4 576.3 L872.2 573.5 L877.6 579.0 L876.3 595.3 L880.3 611.7 L884.4 633.4 L883.1 644.3 L880.3 649.8 L874.9 638.9 L866.7 625.3 L855.8 615.7 L845.0 611.7 L830.0 606.2 Z" transform="translate(0 16.00)" fill="url(#wp)"/><path d="M830.0 584.4 L836.8 580.4 L850.4 576.3 L872.2 573.5 L877.6 579.0 L876.3 595.3 L880.3 611.7 L884.4 633.4 L883.1 644.3 L880.3 649.8 L874.9 638.9 L866.7 625.3 L855.8 615.7 L845.0 611.7 L830.0 606.2 Z" transform="translate(0 14.40)" fill="url(#wp)"/><path d="M830.0 584.4 L836.8 580.4 L850.4 576.3 L872.2 573.5 L877.6 579.0 L876.3 595.3 L880.3 611.7 L884.4 633.4 L883.1 644.3 L880.3 649.8 L874.9 638.9 L866.7 625.3 L855.8 615.7 L845.0 611.7 L830.0 606.2 Z" transform="translate(0 12.80)" fill="url(#wp)"/><path d="M830.0 584.4 L836.8 580.4 L850.4 576.3 L872.2 573.5 L877.6 579.0 L876.3 595.3 L880.3 611.7 L884.4 633.4 L883.1 644.3 L880.3 649.8 L874.9 638.9 L866.7 625.3 L855.8 615.7 L845.0 611.7 L830.0 606.2 Z" transform="translate(0 11.20)" fill="url(#wp)"/><path d="M830.0 584.4 L836.8 580.4 L850.4 576.3 L872.2 573.5 L877.6 579.0 L876.3 595.3 L880.3 611.7 L884.4 633.4 L883.1 644.3 L880.3 649.8 L874.9 638.9 L866.7 625.3 L855.8 615.7 L845.0 611.7 L830.0 606.2 Z" transform="translate(0 9.60)" fill="url(#wp)"/><path d="M830.0 584.4 L836.8 580.4 L850.4 576.3 L872.2 573.5 L877.6 579.0 L876.3 595.3 L880.3 611.7 L884.4 633.4 L883.1 644.3 L880.3 649.8 L874.9 638.9 L866.7 625.3 L855.8 615.7 L845.0 611.7 L830.0 606.2 Z" transform="translate(0 8.00)" fill="url(#wp)"/><path d="M830.0 584.4 L836.8 580.4 L850.4 576.3 L872.2 573.5 L877.6 579.0 L876.3 595.3 L880.3 611.7 L884.4 633.4 L883.1 644.3 L880.3 649.8 L874.9 638.9 L866.7 625.3 L855.8 615.7 L845.0 611.7 L830.0 606.2 Z" transform="translate(0 6.40)" fill="url(#wp)"/><path d="M830.0 584.4 L836.8 580.4 L850.4 576.3 L872.2 573.5 L877.6 579.0 L876.3 595.3 L880.3 611.7 L884.4 633.4 L883.1 644.3 L880.3 649.8 L874.9 638.9 L866.7 625.3 L855.8 615.7 L845.0 611.7 L830.0 606.2 Z" transform="translate(0 4.80)" fill="url(#wp)"/><path d="M830.0 584.4 L836.8 580.4 L850.4 576.3 L872.2 573.5 L877.6 579.0 L876.3 595.3 L880.3 611.7 L884.4 633.4 L883.1 644.3 L880.3 649.8 L874.9 638.9 L866.7 625.3 L855.8 615.7 L845.0 611.7 L830.0 606.2 Z" transform="translate(0 3.20)" fill="url(#wp)"/><path d="M830.0 584.4 L836.8 580.4 L850.4 576.3 L872.2 573.5 L877.6 579.0 L876.3 595.3 L880.3 611.7 L884.4 633.4 L883.1 644.3 L880.3 649.8 L874.9 638.9 L866.7 625.3 L855.8 615.7 L845.0 611.7 L830.0 606.2 Z" transform="translate(0 1.60)" fill="url(#wp)"/><path d="M830.0 584.4 L836.8 580.4 L850.4 576.3 L872.2 573.5 L877.6 579.0 L876.3 595.3 L880.3 611.7 L884.4 633.4 L883.1 644.3 L880.3 649.8 L874.9 638.9 L866.7 625.3 L855.8 615.7 L845.0 611.7 L830.0 606.2 Z" fill="url(#fg)"/><path d="M877.6 566.0 L888.5 557.2 L899.4 551.8 L913.0 554.5 L923.9 557.2 L930.7 570.8 L934.8 584.4 L934.2 598.0 L930.7 611.7 L923.9 622.5 L918.4 628.0 L913.0 622.5 L904.8 611.7 L896.6 598.0 L888.5 587.2 L881.7 583.1 L877.6 581.7 Z" transform="translate(0 16.00)" fill="url(#wp)"/><path d="M877.6 566.0 L888.5 557.2 L899.4 551.8 L913.0 554.5 L923.9 557.2 L930.7 570.8 L934.8 584.4 L934.2 598.0 L930.7 611.7 L923.9 622.5 L918.4 628.0 L913.0 622.5 L904.8 611.7 L896.6 598.0 L888.5 587.2 L881.7 583.1 L877.6 581.7 Z" transform="translate(0 14.40)" fill="url(#wp)"/><path d="M877.6 566.0 L888.5 557.2 L899.4 551.8 L913.0 554.5 L923.9 557.2 L930.7 570.8 L934.8 584.4 L934.2 598.0 L930.7 611.7 L923.9 622.5 L918.4 628.0 L913.0 622.5 L904.8 611.7 L896.6 598.0 L888.5 587.2 L881.7 583.1 L877.6 581.7 Z" transform="translate(0 12.80)" fill="url(#wp)"/><path d="M877.6 566.0 L888.5 557.2 L899.4 551.8 L913.0 554.5 L923.9 557.2 L930.7 570.8 L934.8 584.4 L934.2 598.0 L930.7 611.7 L923.9 622.5 L918.4 628.0 L913.0 622.5 L904.8 611.7 L896.6 598.0 L888.5 587.2 L881.7 583.1 L877.6 581.7 Z" transform="translate(0 11.20)" fill="url(#wp)"/><path d="M877.6 566.0 L888.5 557.2 L899.4 551.8 L913.0 554.5 L923.9 557.2 L930.7 570.8 L934.8 584.4 L934.2 598.0 L930.7 611.7 L923.9 622.5 L918.4 628.0 L913.0 622.5 L904.8 611.7 L896.6 598.0 L888.5 587.2 L881.7 583.1 L877.6 581.7 Z" transform="translate(0 9.60)" fill="url(#wp)"/><path d="M877.6 566.0 L888.5 557.2 L899.4 551.8 L913.0 554.5 L923.9 557.2 L930.7 570.8 L934.8 584.4 L934.2 598.0 L930.7 611.7 L923.9 622.5 L918.4 628.0 L913.0 622.5 L904.8 611.7 L896.6 598.0 L888.5 587.2 L881.7 583.1 L877.6 581.7 Z" transform="translate(0 8.00)" fill="url(#wp)"/><path d="M877.6 566.0 L888.5 557.2 L899.4 551.8 L913.0 554.5 L923.9 557.2 L930.7 570.8 L934.8 584.4 L934.2 598.0 L930.7 611.7 L923.9 622.5 L918.4 628.0 L913.0 622.5 L904.8 611.7 L896.6 598.0 L888.5 587.2 L881.7 583.1 L877.6 581.7 Z" transform="translate(0 6.40)" fill="url(#wp)"/><path d="M877.6 566.0 L888.5 557.2 L899.4 551.8 L913.0 554.5 L923.9 557.2 L930.7 570.8 L934.8 584.4 L934.2 598.0 L930.7 611.7 L923.9 622.5 L918.4 628.0 L913.0 622.5 L904.8 611.7 L896.6 598.0 L888.5 587.2 L881.7 583.1 L877.6 581.7 Z" transform="translate(0 4.80)" fill="url(#wp)"/><path d="M877.6 566.0 L888.5 557.2 L899.4 551.8 L913.0 554.5 L923.9 557.2 L930.7 570.8 L934.8 584.4 L934.2 598.0 L930.7 611.7 L923.9 622.5 L918.4 628.0 L913.0 622.5 L904.8 611.7 L896.6 598.0 L888.5 587.2 L881.7 583.1 L877.6 581.7 Z" transform="translate(0 3.20)" fill="url(#wp)"/><path d="M877.6 566.0 L888.5 557.2 L899.4 551.8 L913.0 554.5 L923.9 557.2 L930.7 570.8 L934.8 584.4 L934.2 598.0 L930.7 611.7 L923.9 622.5 L918.4 628.0 L913.0 622.5 L904.8 611.7 L896.6 598.0 L888.5 587.2 L881.7 583.1 L877.6 581.7 Z" transform="translate(0 1.60)" fill="url(#wp)"/><path d="M877.6 566.0 L888.5 557.2 L899.4 551.8 L913.0 554.5 L923.9 557.2 L930.7 570.8 L934.8 584.4 L934.2 598.0 L930.7 611.7 L923.9 622.5 L918.4 628.0 L913.0 622.5 L904.8 611.7 L896.6 598.0 L888.5 587.2 L881.7 583.1 L877.6 581.7 Z" fill="url(#fg)"/><path d="M394.4 415.0 L410.0 410.0 L423.4 403.4 L445.0 396.0 L464.0 386.0 L487.2 368.6 L516.2 359.9" transform="translate(0 0.8)" fill="none" stroke="#c0ac22" stroke-width="0.9"/><path d="M394.4 415.0 L410.0 410.0 L423.4 403.4 L445.0 396.0 L464.0 386.0 L487.2 368.6 L516.2 359.9" fill="none" stroke="#f6ea6a" stroke-width="0.8"/><path d="M562.6 313.5 L580.0 317.0 L591.6 322.2 L585.8 336.7" transform="translate(0 0.8)" fill="none" stroke="#c0ac22" stroke-width="0.9"/><path d="M562.6 313.5 L580.0 317.0 L591.6 322.2 L585.8 336.7" fill="none" stroke="#f6ea6a" stroke-width="0.8"/><path d="M604.0 303.0 L612.0 318.0 L623.5 322.0" transform="translate(0 0.8)" fill="none" stroke="#c0ac22" stroke-width="0.9"/><path d="M604.0 303.0 L612.0 318.0 L623.5 322.0" fill="none" stroke="#f6ea6a" stroke-width="0.8"/><path d="M623.5 330.9 L632.2 351.2" transform="translate(0 0.8)" fill="none" stroke="#c0ac22" stroke-width="0.9"/><path d="M623.5 330.9 L632.2 351.2" fill="none" stroke="#f6ea6a" stroke-width="0.8"/><path d="M716.3 394.7 L730.8 415.0" transform="translate(0 0.8)" fill="none" stroke="#c0ac22" stroke-width="0.9"/><path d="M716.3 394.7 L730.8 415.0" fill="none" stroke="#f6ea6a" stroke-width="0.8"/><path d="M770.0 452.0 L790.0 458.0 L800.0 470.0" transform="translate(0 0.8)" fill="none" stroke="#c0ac22" stroke-width="0.9"/><path d="M770.0 452.0 L790.0 458.0 L800.0 470.0" fill="none" stroke="#f6ea6a" stroke-width="0.8"/><path d="M846.8 502.0 L861.3 525.2" transform="translate(0 0.8)" fill="none" stroke="#c0ac22" stroke-width="0.9"/><path d="M846.8 502.0 L861.3 525.2" fill="none" stroke="#f6ea6a" stroke-width="0.8"/><path d="M322.0 469.0 L340.0 473.0 L356.0 480.0" transform="translate(0 0.8)" fill="none" stroke="#c0ac22" stroke-width="0.9"/><path d="M322.0 469.0 L340.0 473.0 L356.0 480.0" fill="none" stroke="#f6ea6a" stroke-width="0.8"/><path d="M446.6 554.2 L464.0 560.0 L458.2 577.4" transform="translate(0 0.8)" fill="none" stroke="#c0ac22" stroke-width="0.9"/><path d="M446.6 554.2 L464.0 560.0 L458.2 577.4" fill="none" stroke="#f6ea6a" stroke-width="0.8"/><path d="M585.0 671.0 L598.0 680.0 L604.0 698.0" transform="translate(0 0.8)" fill="none" stroke="#c0ac22" stroke-width="0.9"/><path d="M585.0 671.0 L598.0 680.0 L604.0 698.0" fill="none" stroke="#f6ea6a" stroke-width="0.8"/><path d="M640.0 700.0 L660.0 690.0 L680.0 688.0" transform="translate(0 0.8)" fill="none" stroke="#c0ac22" stroke-width="0.9"/><path d="M640.0 700.0 L660.0 690.0 L680.0 688.0" fill="none" stroke="#f6ea6a" stroke-width="0.8"/><path d="M832.0 588.0 L850.0 584.0 L872.0 586.0" transform="translate(0 0.8)" fill="none" stroke="#c0ac22" stroke-width="0.9"/><path d="M832.0 588.0 L850.0 584.0 L872.0 586.0" fill="none" stroke="#f6ea6a" stroke-width="0.8"/><path d="M750.0 648.0 L770.0 640.0 L790.0 640.0" transform="translate(0 0.8)" fill="none" stroke="#c0ac22" stroke-width="0.9"/><path d="M750.0 648.0 L770.0 640.0 L790.0 640.0" fill="none" stroke="#f6ea6a" stroke-width="0.8"/><ellipse cx="331.8" cy="461.09999999999997" rx="4" ry="3.6" fill="#a8961a" opacity="0.8"/><circle cx="331.5" cy="459.9" r="3.5" fill="#d6c22a"/><circle cx="330.8" cy="459.0" r="2.1" fill="#efe05a"/><circle cx="330.5" cy="458.59999999999997" r="0.9" fill="#fff8b0"/><ellipse cx="363.0" cy="422.2" rx="4" ry="3.6" fill="#a8961a" opacity="0.8"/><circle cx="362.7" cy="421" r="3.5" fill="#d6c22a"/><circle cx="362.0" cy="420.1" r="2.1" fill="#efe05a"/><circle cx="361.7" cy="419.7" r="0.9" fill="#fff8b0"/><ellipse cx="456.7" cy="366.59999999999997" rx="4" ry="3.6" fill="#a8961a" opacity="0.8"/><circle cx="456.4" cy="365.4" r="3.5" fill="#d6c22a"/><circle cx="455.7" cy="364.5" r="2.1" fill="#efe05a"/><circle cx="455.4" cy="364.09999999999997" r="0.9" fill="#fff8b0"/><ellipse cx="534.5999999999999" cy="321.0" rx="4" ry="3.6" fill="#a8961a" opacity="0.8"/><circle cx="534.3" cy="319.8" r="3.5" fill="#d6c22a"/><circle cx="533.5999999999999" cy="318.90000000000003" r="2.1" fill="#efe05a"/><circle cx="533.3" cy="318.5" r="0.9" fill="#fff8b0"/><ellipse cx="574.0999999999999" cy="308.9" rx="4" ry="3.6" fill="#a8961a" opacity="0.8"/><circle cx="573.8" cy="307.7" r="3.5" fill="#d6c22a"/><circle cx="573.0999999999999" cy="306.8" r="2.1" fill="#efe05a"/><circle cx="572.8" cy="306.4" r="0.9" fill="#fff8b0"/><ellipse cx="613.9" cy="330.2" rx="4" ry="3.6" fill="#a8961a" opacity="0.8"/><circle cx="613.6" cy="329" r="3.5" fill="#d6c22a"/><circle cx="612.9" cy="328.1" r="2.1" fill="#efe05a"/><circle cx="612.6" cy="327.7" r="0.9" fill="#fff8b0"/><ellipse cx="659.1999999999999" cy="359.5" rx="4" ry="3.6" fill="#a8961a" opacity="0.8"/><circle cx="658.9" cy="358.3" r="3.5" fill="#d6c22a"/><circle cx="658.1999999999999" cy="357.40000000000003" r="2.1" fill="#efe05a"/><circle cx="657.9" cy="357.0" r="0.9" fill="#fff8b0"/><ellipse cx="705.5999999999999" cy="395.9" rx="4" ry="3.6" fill="#a8961a" opacity="0.8"/><circle cx="705.3" cy="394.7" r="3.5" fill="#d6c22a"/><circle cx="704.5999999999999" cy="393.8" r="2.1" fill="#efe05a"/><circle cx="704.3" cy="393.4" r="0.9" fill="#fff8b0"/><ellipse cx="899.9" cy="564.1" rx="4" ry="3.6" fill="#a8961a" opacity="0.8"/><circle cx="899.6" cy="562.9" r="3.5" fill="#d6c22a"/><circle cx="898.9" cy="562.0" r="2.1" fill="#efe05a"/><circle cx="898.6" cy="561.6" r="0.9" fill="#fff8b0"/><ellipse cx="841.9" cy="597.2" rx="4" ry="3.6" fill="#a8961a" opacity="0.8"/><circle cx="841.6" cy="596" r="3.5" fill="#d6c22a"/><circle cx="840.9" cy="595.1" r="2.1" fill="#efe05a"/><circle cx="840.6" cy="594.7" r="0.9" fill="#fff8b0"/><ellipse cx="804.1999999999999" cy="620.4000000000001" rx="4" ry="3.6" fill="#a8961a" opacity="0.8"/><circle cx="803.9" cy="619.2" r="3.5" fill="#d6c22a"/><circle cx="803.1999999999999" cy="618.3000000000001" r="2.1" fill="#efe05a"/><circle cx="802.9" cy="617.9000000000001" r="0.9" fill="#fff8b0"/><ellipse cx="756.0999999999999" cy="651.2" rx="4" ry="3.6" fill="#a8961a" opacity="0.8"/><circle cx="755.8" cy="650" r="3.5" fill="#d6c22a"/><circle cx="755.0999999999999" cy="649.1" r="2.1" fill="#efe05a"/><circle cx="754.8" cy="648.7" r="0.9" fill="#fff8b0"/><ellipse cx="711.3" cy="674.2" rx="4" ry="3.6" fill="#a8961a" opacity="0.8"/><circle cx="711" cy="673" r="3.5" fill="#d6c22a"/><circle cx="710.3" cy="672.1" r="2.1" fill="#efe05a"/><circle cx="710" cy="671.7" r="0.9" fill="#fff8b0"/><ellipse cx="659.1999999999999" cy="703.3000000000001" rx="4" ry="3.6" fill="#a8961a" opacity="0.8"/><circle cx="658.9" cy="702.1" r="3.5" fill="#d6c22a"/><circle cx="658.1999999999999" cy="701.2" r="2.1" fill="#efe05a"/><circle cx="657.9" cy="700.8000000000001" r="0.9" fill="#fff8b0"/><ellipse cx="503.1" cy="597.1" rx="4" ry="3.6" fill="#a8961a" opacity="0.8"/><circle cx="502.8" cy="595.9" r="3.5" fill="#d6c22a"/><circle cx="502.1" cy="595.0" r="2.1" fill="#efe05a"/><circle cx="501.8" cy="594.6" r="0.9" fill="#fff8b0"/><ellipse cx="533.9" cy="623.2" rx="4" ry="3.6" fill="#a8961a" opacity="0.8"/><circle cx="533.6" cy="622" r="3.5" fill="#d6c22a"/><circle cx="532.9" cy="621.1" r="2.1" fill="#efe05a"/><circle cx="532.6" cy="620.7" r="0.9" fill="#fff8b0"/><ellipse cx="568.8" cy="647.9000000000001" rx="4" ry="3.6" fill="#a8961a" opacity="0.8"/><circle cx="568.5" cy="646.7" r="3.5" fill="#d6c22a"/><circle cx="567.8" cy="645.8000000000001" r="2.1" fill="#efe05a"/><circle cx="567.5" cy="645.4000000000001" r="0.9" fill="#fff8b0"/></svg>
</body></html>
